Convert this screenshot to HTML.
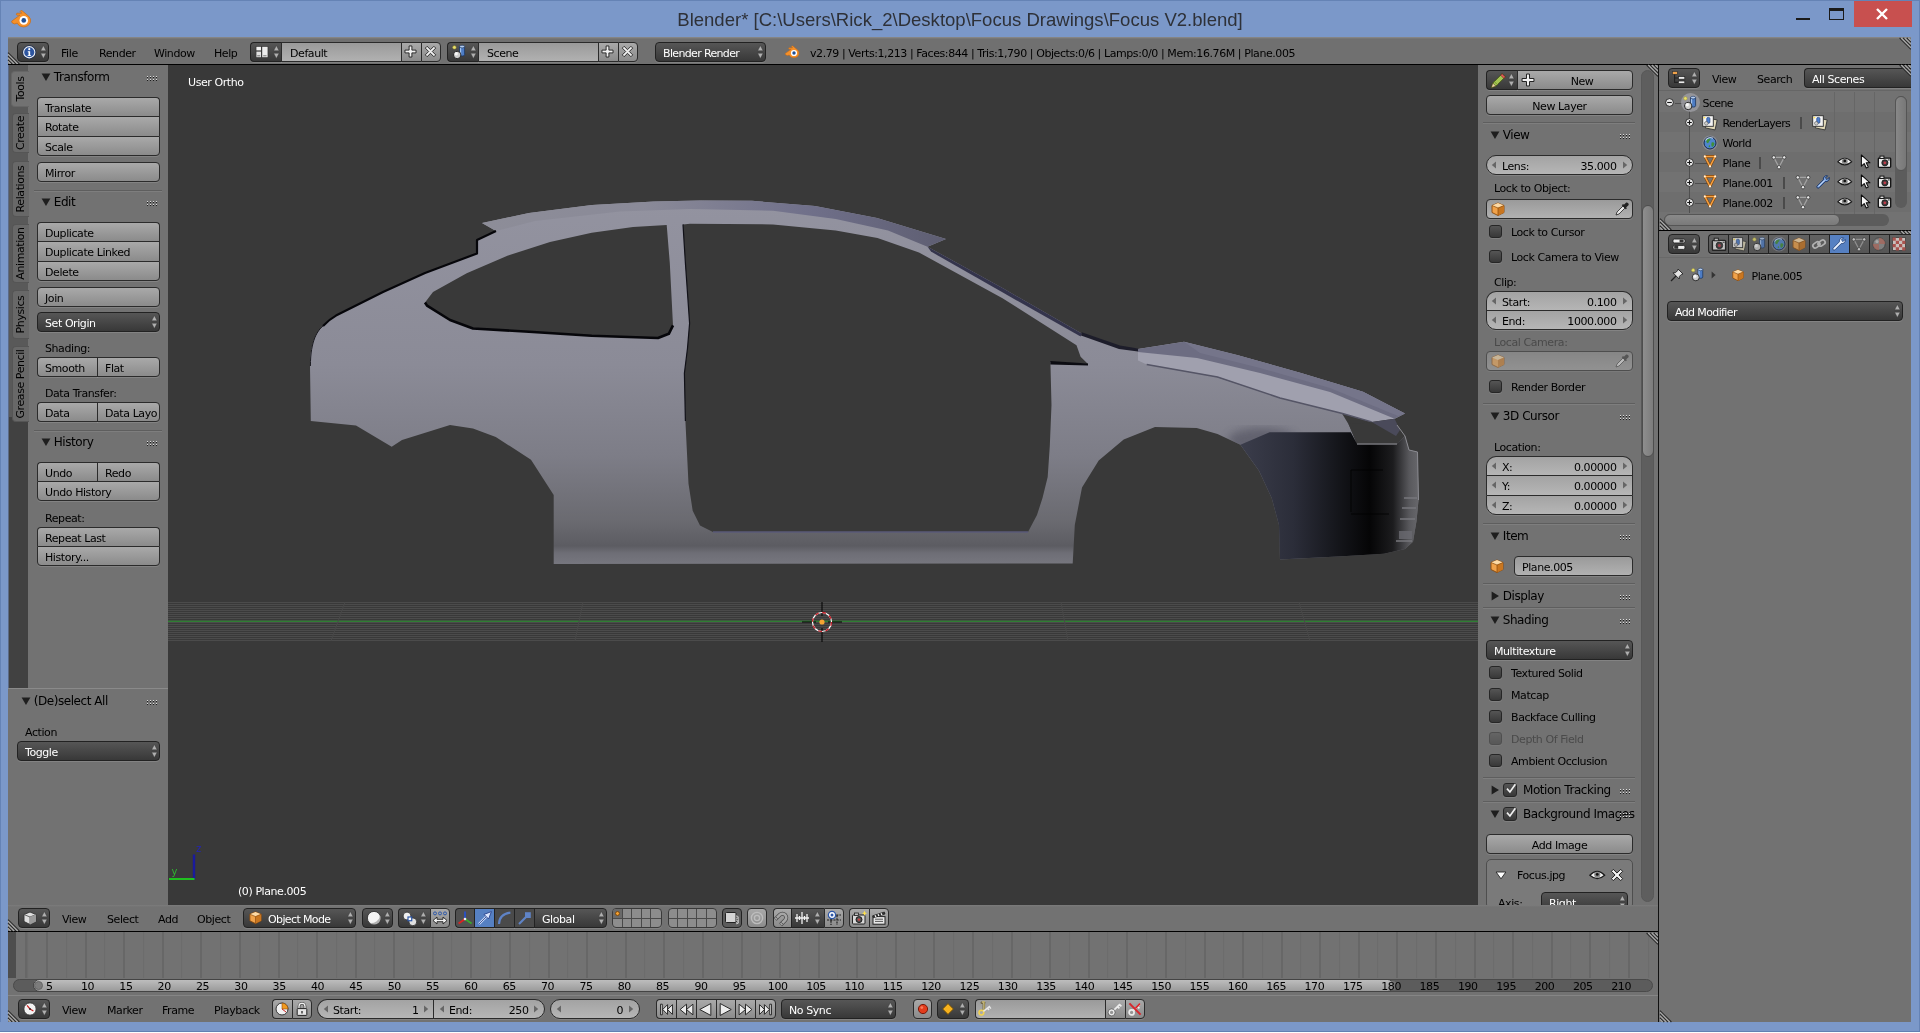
<!DOCTYPE html>
<html lang="en"><head><meta charset="utf-8"><title>Blender</title>
<style>

html,body{margin:0;padding:0;}
body{width:1920px;height:1033px;overflow:hidden;position:relative;background:#7b98c9;font-family:"DejaVu Sans","Liberation Sans",sans-serif;font-size:11px;letter-spacing:-0.42px;color:#000;}
div{position:absolute;box-sizing:border-box;white-space:nowrap;}
.btn,.menu,.num,.txt{overflow:hidden;}
svg{position:absolute;overflow:visible;}
.t{line-height:16px;height:16px;}
.w{color:#fff;}
.g{color:#4a4a4a;}
.ph{font-size:12px;letter-spacing:-0.45px;line-height:16px;height:16px;}
.reg{background:#727272;}
.dark{background:#393939;}
/* tool button */
.btn{background:linear-gradient(#a9a9a9,#8b8b8b);border:1px solid #2b2b2b;border-radius:4px;line-height:21px;padding-left:7px;box-shadow:0 1px 0 rgba(255,255,255,.12);}
.btn.c{padding-left:0;text-align:center;}
/* dark menu */
.menu{background:linear-gradient(#565656,#383838);border:1px solid #222;border-radius:4px;color:#fff;line-height:21px;padding-left:7px;box-shadow:0 1px 0 rgba(255,255,255,.12);}
/* number field */
.num{background:linear-gradient(#a3a3a3,#b6b6b6);border:1px solid #2b2b2b;border-radius:10px;line-height:21px;box-shadow:0 1px 0 rgba(255,255,255,.12);}
.num .l{left:15px;top:0;}
.num .r{right:15.5px;top:0;}
/* text field */
.txt{background:linear-gradient(#9a9a9a,#b1b1b1);border:1px solid #2b2b2b;border-radius:4px;line-height:21px;padding-left:7px;box-shadow:0 1px 0 rgba(255,255,255,.12);}
/* checkbox */
.chk{background:linear-gradient(#555,#383838);border:1px solid #262626;border-radius:3px;box-shadow:0 1px 0 rgba(255,255,255,.1);}
.rt,.num.rt{border-top-left-radius:0;border-top-right-radius:0;}
.rb,.num.rb{border-bottom-left-radius:0;border-bottom-right-radius:0;border-bottom-width:0;box-shadow:none;}
.rl,.num.rl{border-top-left-radius:0;border-bottom-left-radius:0;}
.rr,.num.rr{border-top-right-radius:0;border-bottom-right-radius:0;border-right-width:0;}
.sep{background:#5e5e5e;height:1px;border-bottom:1px solid #7e7e7e;box-sizing:content-box;}
.hl{background:#000;}

</style></head>
<body>
<div id="root" style="left:0;top:0;width:1920px;height:1033px;overflow:hidden;opacity:.9999;">

<div class="" style="left:0px;top:0px;width:1920px;height:1033px;background:#7b98c9;border:1px solid #6583b5;"></div>
<div style="left:0;top:2.6px;width:1920px;height:34px;line-height:34px;text-align:center;font-family:'Liberation Sans',sans-serif;font-size:18.55px;letter-spacing:0;color:#2e3138;">Blender* [C:\Users\Rick_2\Desktop\Focus Drawings\Focus V2.blend]</div>
<svg style="left:10px;top:8px;" width="22" height="22" viewBox="0 0 16 16"><path d="M1.2 9.6 L7.2 5.2 L5 5.2 Q4.2 4.4 5 3.8 L8.6 3.8 L7.4 2.6 Q7.6 1.6 8.8 2 L13.6 6 Q15.6 8 14.8 10.4 Q13.6 13.6 9.8 13.8 Q6.4 13.6 5.2 11 L3.4 11.6 Q1 11.2 1.2 9.6Z" fill="#f5902a" stroke="#c96a12" stroke-width=".5"/><circle cx="10" cy="9" r="3.1" fill="#fff"/><circle cx="10" cy="9" r="1.7" fill="#1f4e94"/></svg>
<div class="" style="left:1796px;top:18px;width:14px;height:2px;background:#1a1a1a;"></div>
<div class="" style="left:1829px;top:8px;width:15px;height:12px;border:1px solid #1a1a1a;border-top-width:3px;"></div>
<div class="" style="left:1854px;top:1px;width:58px;height:25.5px;background:#c8504f;"></div>
<svg style="left:1875px;top:7px" width="14" height="14" viewBox="0 0 14 14"><path d="M2 2 L12 12 M12 2 L2 12" stroke="#fff" stroke-width="2.4"/></svg>
<div class="" style="left:8px;top:37px;width:1903px;height:985px;background:#2e2e2e;"></div>
<div class="" style="left:8px;top:37px;width:1903px;height:27px;background:linear-gradient(#8c8c8c 0,#707070 2px,#707070);"></div>
<svg style="left:8px;top:52px" width="12" height="12" viewBox="0 0 12 12"><path d="M0 0.6 L11.4 12 M0 4.2 L7.8 12 M0 7.8 L4.2 12" stroke="#2a2a2a" stroke-width="1.1"/><path d="M0 2.2 L9.8 12 M0 5.8 L6.2 12 M0 9.4 L2.6 12" stroke="#a8a8a8" stroke-width="1.1"/></svg>
<svg style="left:1899px;top:38px" width="12" height="12" viewBox="0 0 12 12"><path d="M0.6 0 L12 11.4 M4.2 0 L12 7.8 M7.8 0 L12 4.2" stroke="#2a2a2a" stroke-width="1.1"/><path d="M2.2 0 L12 9.8 M5.8 0 L12 6.2 M9.4 0 L12 2.6" stroke="#a8a8a8" stroke-width="1.1"/></svg>
<div class="menu" style="left:17px;top:42px;width:32px;height:20px;"></div>
<svg style="left:22px;top:44.5px;" width="14.5" height="14.5" viewBox="0 0 16 16"><circle cx="8" cy="8" r="7.6" fill="#1c2f55"/><circle cx="8" cy="8" r="6.2" fill="#2d55a0" stroke="#f0f0f0" stroke-width="1.2"/><circle cx="8" cy="4.6" r="1.2" fill="#fff"/><path d="M6.4 7 H9 V11.2 H10 V12.2 H6.2 V11.2 H7.2 V8 H6.4Z" fill="#fff"/></svg>
<svg style="left:38.7px;top:45px;" width="14" height="14" viewBox="0 0 16 16"><path d="M1.85 6.6 L5 0.6 L8.15 6.6Z M1.85 9.4 L5 15.4 L8.15 9.4Z" fill="#b0b0b0" stroke="#333" stroke-width=".5"/></svg>
<div class="t" style="left:61px;top:46.2px;">File</div>
<div class="t" style="left:99px;top:46.2px;">Render</div>
<div class="t" style="left:154px;top:46.2px;">Window</div>
<div class="t" style="left:214px;top:46.2px;">Help</div>
<div class="menu rr" style="left:250px;top:42px;width:32px;height:20px;"></div>
<svg style="left:254px;top:44px;" width="16" height="16" viewBox="0 0 16 16"><rect x="1.5" y="2" width="13" height="12" rx="1" fill="#3a3a3a"/><rect x="2.4" y="2.8" width="4.6" height="3.6" fill="#f4f4f4"/><rect x="2.4" y="7.6" width="4.6" height="5.6" fill="#e2e2e2"/><rect x="8.2" y="2.8" width="5.4" height="10.4" fill="#ececec"/><path d="M3.2 11.8 H6.2 M9.2 11.8 H12.6" stroke="#555" stroke-width=".8"/></svg>
<svg style="left:271.7px;top:45px;" width="14" height="14" viewBox="0 0 16 16"><path d="M1.85 6.6 L5 0.6 L8.15 6.6Z M1.85 9.4 L5 15.4 L8.15 9.4Z" fill="#b0b0b0" stroke="#333" stroke-width=".5"/></svg>
<div class="txt rl rr" style="left:281px;top:42px;width:121px;height:20px;padding-left:8px;">Default</div>
<div class="btn rl rr" style="left:401px;top:42px;width:20px;height:20px;"></div>
<svg style="left:404.3px;top:45px;" width="13" height="13" viewBox="0 0 16 16"><path d="M6.3 1.2 H9.7 V6.3 H14.8 V9.7 H9.7 V14.8 H6.3 V9.7 H1.2 V6.3 H6.3Z" fill="#f2f2f2" stroke="#1c1c1c" stroke-width="1.1"/></svg>
<div class="btn rl" style="left:421px;top:42px;width:20px;height:20px;"></div>
<svg style="left:424.2px;top:45px;" width="13" height="13" viewBox="0 0 16 16"><path d="M1.6 3.8 L3.8 1.6 L8 5.8 L12.2 1.6 L14.4 3.8 L10.2 8 L14.4 12.2 L12.2 14.4 L8 10.2 L3.8 14.4 L1.6 12.2 L5.8 8Z" fill="#f2f2f2" stroke="#1c1c1c" stroke-width="1.1"/></svg>
<div class="menu rr" style="left:447px;top:42px;width:32px;height:20px;"></div>
<svg style="left:451px;top:44px;" width="16" height="16" viewBox="0 0 16 16"><path d="M8.6 2.6 V10.8 A2.5 1.3 0 0 0 13.6 10.8 V2.6Z" fill="#4d7cc4" stroke="#1c355f" stroke-width=".8"/><path d="M9.6 3.4 V11" stroke="#a9c8f2" stroke-width="1.1"/><ellipse cx="11.1" cy="2.6" rx="2.5" ry="1.3" fill="#b5cdee" stroke="#1c355f" stroke-width=".6"/><circle cx="6.2" cy="11" r="3.7" fill="#cfcfcf" stroke="#1a1a1a" stroke-width=".9"/><circle cx="5.2" cy="9.8" r="1.7" fill="#fff" opacity=".85"/><circle cx="3.4" cy="3.4" r="1.7" fill="#e8e070" stroke="#a89c2a" stroke-width=".5"/></svg>
<svg style="left:468.7px;top:45px;" width="14" height="14" viewBox="0 0 16 16"><path d="M1.85 6.6 L5 0.6 L8.15 6.6Z M1.85 9.4 L5 15.4 L8.15 9.4Z" fill="#b0b0b0" stroke="#333" stroke-width=".5"/></svg>
<div class="txt rl rr" style="left:478px;top:42px;width:121px;height:20px;padding-left:8px;">Scene</div>
<div class="btn rl rr" style="left:598px;top:42px;width:20px;height:20px;"></div>
<svg style="left:601.3px;top:45px;" width="13" height="13" viewBox="0 0 16 16"><path d="M6.3 1.2 H9.7 V6.3 H14.8 V9.7 H9.7 V14.8 H6.3 V9.7 H1.2 V6.3 H6.3Z" fill="#f2f2f2" stroke="#1c1c1c" stroke-width="1.1"/></svg>
<div class="btn rl" style="left:618px;top:42px;width:20px;height:20px;"></div>
<svg style="left:621.2px;top:45px;" width="13" height="13" viewBox="0 0 16 16"><path d="M1.6 3.8 L3.8 1.6 L8 5.8 L12.2 1.6 L14.4 3.8 L10.2 8 L14.4 12.2 L12.2 14.4 L8 10.2 L3.8 14.4 L1.6 12.2 L5.8 8Z" fill="#f2f2f2" stroke="#1c1c1c" stroke-width="1.1"/></svg>
<div class="menu" style="left:655px;top:42px;width:111px;height:20px;letter-spacing:-0.65px;">Blender Render</div>
<svg style="left:755.7px;top:45px;" width="14" height="14" viewBox="0 0 16 16"><path d="M1.85 6.6 L5 0.6 L8.15 6.6Z M1.85 9.4 L5 15.4 L8.15 9.4Z" fill="#b0b0b0" stroke="#333" stroke-width=".5"/></svg>
<svg style="left:784px;top:44px;" width="16" height="16" viewBox="0 0 16 16"><path d="M1.2 9.6 L7.2 5.2 L5 5.2 Q4.2 4.4 5 3.8 L8.6 3.8 L7.4 2.6 Q7.6 1.6 8.8 2 L13.6 6 Q15.6 8 14.8 10.4 Q13.6 13.6 9.8 13.8 Q6.4 13.6 5.2 11 L3.4 11.6 Q1 11.2 1.2 9.6Z" fill="#f5902a" stroke="#c96a12" stroke-width=".5"/><circle cx="10" cy="9" r="3.1" fill="#fff"/><circle cx="10" cy="9" r="1.7" fill="#1f4e94"/></svg>
<div class="t" style="left:810px;top:46.2px;">v2.79 | Verts:1,213 | Faces:844 | Tris:1,790 | Objects:0/6 | Lamps:0/0 | Mem:16.76M | Plane.005</div>
<div class="hl" style="left:8px;top:64px;width:1903px;height:1px;"></div>
<div class="reg" style="left:8px;top:65px;width:160px;height:624px;"></div>
<div class="" style="left:8px;top:65px;width:20px;height:624px;background:#414141;"></div>
<div class="" style="left:9px;top:65px;width:19px;height:352px;background:#595959;"></div>
<div class="" style="left:8px;top:65px;width:1px;height:624px;background:#5c6a86;"></div>
<div class="" style="left:11px;top:71px;width:18px;height:36px;background:#727272;border-radius:4px 0 0 4px;border:1px solid #666;border-right:0;"></div>
<div style="left:13px;top:71px;width:16px;height:36px;"><div style="left:0;top:0;width:36px;height:16px;line-height:16px;text-align:center;transform-origin:0 0;transform:translate(0,36px) rotate(-90deg);">Tools</div></div>
<div class="" style="left:12px;top:113px;width:17px;height:40px;background:#686868;border-radius:4px 0 0 4px;border:1px solid #555;border-right:0;"></div>
<div style="left:13px;top:113px;width:16px;height:40px;"><div style="left:0;top:0;width:40px;height:16px;line-height:16px;text-align:center;transform-origin:0 0;transform:translate(0,40px) rotate(-90deg);">Create</div></div>
<div class="" style="left:12px;top:161px;width:17px;height:56px;background:#686868;border-radius:4px 0 0 4px;border:1px solid #555;border-right:0;"></div>
<div style="left:13px;top:161px;width:16px;height:56px;"><div style="left:0;top:0;width:56px;height:16px;line-height:16px;text-align:center;transform-origin:0 0;transform:translate(0,56px) rotate(-90deg);">Relations</div></div>
<div class="" style="left:12px;top:224px;width:17px;height:59px;background:#686868;border-radius:4px 0 0 4px;border:1px solid #555;border-right:0;"></div>
<div style="left:13px;top:224px;width:16px;height:59px;"><div style="left:0;top:0;width:59px;height:16px;line-height:16px;text-align:center;transform-origin:0 0;transform:translate(0,59px) rotate(-90deg);">Animation</div></div>
<div class="" style="left:12px;top:290px;width:17px;height:49px;background:#686868;border-radius:4px 0 0 4px;border:1px solid #555;border-right:0;"></div>
<div style="left:13px;top:290px;width:16px;height:49px;"><div style="left:0;top:0;width:49px;height:16px;line-height:16px;text-align:center;transform-origin:0 0;transform:translate(0,49px) rotate(-90deg);">Physics</div></div>
<div class="" style="left:12px;top:346px;width:17px;height:76px;background:#686868;border-radius:4px 0 0 4px;border:1px solid #555;border-right:0;"></div>
<div style="left:13px;top:346px;width:16px;height:76px;"><div style="left:0;top:0;width:76px;height:16px;line-height:16px;text-align:center;transform-origin:0 0;transform:translate(0,76px) rotate(-90deg);">Grease Pencil</div></div>
<svg style="left:41px;top:72px" width="10" height="10" viewBox="0 0 10 10"><path d="M0.6 1.4 H9.4 L5 9Z" fill="#1e1e1e"/></svg>
<div class="ph" style="left:53.8px;top:69.1px;">Transform</div>
<svg style="left:147px;top:76px" width="10" height="5" shape-rendering="crispEdges"><rect x="0" y="0" width="1" height="1" fill="#dcdcdc"/><rect x="0" y="1" width="1" height="1" fill="#1c1c1c"/><rect x="0" y="3" width="1" height="1" fill="#dcdcdc"/><rect x="0" y="4" width="1" height="1" fill="#1c1c1c"/><rect x="3" y="0" width="1" height="1" fill="#dcdcdc"/><rect x="3" y="1" width="1" height="1" fill="#1c1c1c"/><rect x="3" y="3" width="1" height="1" fill="#dcdcdc"/><rect x="3" y="4" width="1" height="1" fill="#1c1c1c"/><rect x="6" y="0" width="1" height="1" fill="#dcdcdc"/><rect x="6" y="1" width="1" height="1" fill="#1c1c1c"/><rect x="6" y="3" width="1" height="1" fill="#dcdcdc"/><rect x="6" y="4" width="1" height="1" fill="#1c1c1c"/><rect x="9" y="0" width="1" height="1" fill="#dcdcdc"/><rect x="9" y="1" width="1" height="1" fill="#1c1c1c"/><rect x="9" y="3" width="1" height="1" fill="#dcdcdc"/><rect x="9" y="4" width="1" height="1" fill="#1c1c1c"/></svg>
<div class="btn rb" style="left:37px;top:97px;width:123px;height:19px;">Translate</div>
<div class="btn rt rb" style="left:37px;top:116px;width:123px;height:20px;">Rotate</div>
<div class="btn rt" style="left:37px;top:136px;width:123px;height:20px;">Scale</div>
<div class="btn" style="left:37px;top:162px;width:123px;height:20px;">Mirror</div>
<div class="sep" style="left:34px;top:190px;width:128px;height:1px;"></div>
<svg style="left:41px;top:197px" width="10" height="10" viewBox="0 0 10 10"><path d="M0.6 1.4 H9.4 L5 9Z" fill="#1e1e1e"/></svg>
<div class="ph" style="left:53.8px;top:194.1px;">Edit</div>
<svg style="left:147px;top:201px" width="10" height="5" shape-rendering="crispEdges"><rect x="0" y="0" width="1" height="1" fill="#dcdcdc"/><rect x="0" y="1" width="1" height="1" fill="#1c1c1c"/><rect x="0" y="3" width="1" height="1" fill="#dcdcdc"/><rect x="0" y="4" width="1" height="1" fill="#1c1c1c"/><rect x="3" y="0" width="1" height="1" fill="#dcdcdc"/><rect x="3" y="1" width="1" height="1" fill="#1c1c1c"/><rect x="3" y="3" width="1" height="1" fill="#dcdcdc"/><rect x="3" y="4" width="1" height="1" fill="#1c1c1c"/><rect x="6" y="0" width="1" height="1" fill="#dcdcdc"/><rect x="6" y="1" width="1" height="1" fill="#1c1c1c"/><rect x="6" y="3" width="1" height="1" fill="#dcdcdc"/><rect x="6" y="4" width="1" height="1" fill="#1c1c1c"/><rect x="9" y="0" width="1" height="1" fill="#dcdcdc"/><rect x="9" y="1" width="1" height="1" fill="#1c1c1c"/><rect x="9" y="3" width="1" height="1" fill="#dcdcdc"/><rect x="9" y="4" width="1" height="1" fill="#1c1c1c"/></svg>
<div class="btn rb" style="left:37px;top:222px;width:123px;height:19px;">Duplicate</div>
<div class="btn rt rb" style="left:37px;top:241px;width:123px;height:20px;">Duplicate Linked</div>
<div class="btn rt" style="left:37px;top:261px;width:123px;height:20px;">Delete</div>
<div class="btn" style="left:37px;top:287px;width:123px;height:20px;">Join</div>
<div class="menu" style="left:37px;top:312px;width:123px;height:20px;">Set Origin</div>
<svg style="left:149.7px;top:315px;" width="14" height="14" viewBox="0 0 16 16"><path d="M1.85 6.6 L5 0.6 L8.15 6.6Z M1.85 9.4 L5 15.4 L8.15 9.4Z" fill="#b0b0b0" stroke="#333" stroke-width=".5"/></svg>
<div class="t" style="left:45px;top:340.5px;">Shading:</div>
<div class="btn rr" style="left:37px;top:357px;width:61px;height:20px;">Smooth</div>
<div class="btn rl" style="left:97px;top:357px;width:63px;height:20px;">Flat</div>
<div class="t" style="left:45px;top:385.5px;">Data Transfer:</div>
<div class="btn rr" style="left:37px;top:402px;width:61px;height:20px;">Data</div>
<div class="btn rl" style="left:97px;top:402px;width:63px;height:20px;">Data Layo</div>
<div class="sep" style="left:34px;top:430px;width:128px;height:1px;"></div>
<svg style="left:41px;top:437px" width="10" height="10" viewBox="0 0 10 10"><path d="M0.6 1.4 H9.4 L5 9Z" fill="#1e1e1e"/></svg>
<div class="ph" style="left:53.8px;top:434.1px;">History</div>
<svg style="left:147px;top:441px" width="10" height="5" shape-rendering="crispEdges"><rect x="0" y="0" width="1" height="1" fill="#dcdcdc"/><rect x="0" y="1" width="1" height="1" fill="#1c1c1c"/><rect x="0" y="3" width="1" height="1" fill="#dcdcdc"/><rect x="0" y="4" width="1" height="1" fill="#1c1c1c"/><rect x="3" y="0" width="1" height="1" fill="#dcdcdc"/><rect x="3" y="1" width="1" height="1" fill="#1c1c1c"/><rect x="3" y="3" width="1" height="1" fill="#dcdcdc"/><rect x="3" y="4" width="1" height="1" fill="#1c1c1c"/><rect x="6" y="0" width="1" height="1" fill="#dcdcdc"/><rect x="6" y="1" width="1" height="1" fill="#1c1c1c"/><rect x="6" y="3" width="1" height="1" fill="#dcdcdc"/><rect x="6" y="4" width="1" height="1" fill="#1c1c1c"/><rect x="9" y="0" width="1" height="1" fill="#dcdcdc"/><rect x="9" y="1" width="1" height="1" fill="#1c1c1c"/><rect x="9" y="3" width="1" height="1" fill="#dcdcdc"/><rect x="9" y="4" width="1" height="1" fill="#1c1c1c"/></svg>
<div class="btn rr rb" style="left:37px;top:462px;width:61px;height:19px;">Undo</div>
<div class="btn rl rb" style="left:97px;top:462px;width:63px;height:19px;">Redo</div>
<div class="btn rt" style="left:37px;top:481px;width:123px;height:20px;">Undo History</div>
<div class="t" style="left:45px;top:510.5px;">Repeat:</div>
<div class="btn rb" style="left:37px;top:527px;width:123px;height:19px;">Repeat Last</div>
<div class="btn rt" style="left:37px;top:546px;width:123px;height:20px;">History...</div>
<div class="" style="left:8px;top:688px;width:160px;height:1px;background:#8a8a8a;"></div>
<div class="reg" style="left:8px;top:689px;width:160px;height:216px;"></div>
<svg style="left:21px;top:696px" width="10" height="10" viewBox="0 0 10 10"><path d="M0.6 1.4 H9.4 L5 9Z" fill="#1e1e1e"/></svg>
<div class="ph" style="left:33.8px;top:693.1px;">(De)select All</div>
<svg style="left:147px;top:700px" width="10" height="5" shape-rendering="crispEdges"><rect x="0" y="0" width="1" height="1" fill="#dcdcdc"/><rect x="0" y="1" width="1" height="1" fill="#1c1c1c"/><rect x="0" y="3" width="1" height="1" fill="#dcdcdc"/><rect x="0" y="4" width="1" height="1" fill="#1c1c1c"/><rect x="3" y="0" width="1" height="1" fill="#dcdcdc"/><rect x="3" y="1" width="1" height="1" fill="#1c1c1c"/><rect x="3" y="3" width="1" height="1" fill="#dcdcdc"/><rect x="3" y="4" width="1" height="1" fill="#1c1c1c"/><rect x="6" y="0" width="1" height="1" fill="#dcdcdc"/><rect x="6" y="1" width="1" height="1" fill="#1c1c1c"/><rect x="6" y="3" width="1" height="1" fill="#dcdcdc"/><rect x="6" y="4" width="1" height="1" fill="#1c1c1c"/><rect x="9" y="0" width="1" height="1" fill="#dcdcdc"/><rect x="9" y="1" width="1" height="1" fill="#1c1c1c"/><rect x="9" y="3" width="1" height="1" fill="#dcdcdc"/><rect x="9" y="4" width="1" height="1" fill="#1c1c1c"/></svg>
<div class="t" style="left:25px;top:724.5px;">Action</div>
<div class="menu" style="left:17px;top:741px;width:143px;height:20px;">Toggle</div>
<svg style="left:149.7px;top:744px;" width="14" height="14" viewBox="0 0 16 16"><path d="M1.85 6.6 L5 0.6 L8.15 6.6Z M1.85 9.4 L5 15.4 L8.15 9.4Z" fill="#b0b0b0" stroke="#333" stroke-width=".5"/></svg>
<div class="dark" style="left:168px;top:65px;width:1311px;height:841px;"></div>
<div class="" style="left:168px;top:602px;width:1311px;height:40px;background:repeating-linear-gradient(180deg,#4b4b4b 0 1px,#393939 1px 2px);"></div>
<div class="" style="left:168px;top:621px;width:1311px;height:1px;background:#2f7d33;"></div>
<div class="" style="left:168px;top:620px;width:1311px;height:1px;background:#3c5a3d;"></div>
<div class="t w" style="left:188px;top:74.5px;">User Ortho</div>
<div class="t w" style="left:238px;top:883.5px;">(0) Plane.005</div>

<svg style="left:168px;top:65px" width="1311" height="841" viewBox="168 65 1311 841">
<defs>
<linearGradient id="gb" gradientUnits="userSpaceOnUse" x1="0" y1="200" x2="0" y2="566">
<stop offset="0" stop-color="#9393a0"/><stop offset=".45" stop-color="#8b8b97"/><stop offset=".7" stop-color="#7d7d87"/><stop offset=".88" stop-color="#6a6a70"/><stop offset=".945" stop-color="#5c5c62"/><stop offset=".965" stop-color="#6e6e76"/><stop offset="1" stop-color="#787880"/>
</linearGradient>
<linearGradient id="gr" gradientUnits="userSpaceOnUse" x1="482" y1="0" x2="946" y2="0">
<stop offset="0" stop-color="#8d8d98"/><stop offset=".35" stop-color="#8a8a98"/><stop offset=".7" stop-color="#70708a"/><stop offset="1" stop-color="#5e5e72"/>
</linearGradient>
<linearGradient id="gf" gradientUnits="userSpaceOnUse" x1="1240" y1="0" x2="1420" y2="0">
<stop offset="0" stop-color="#3b3d4b"/><stop offset=".3" stop-color="#2b2d39"/><stop offset=".55" stop-color="#14151a"/><stop offset=".72" stop-color="#050506"/><stop offset=".85" stop-color="#1c1c1e"/><stop offset=".94" stop-color="#58585c"/><stop offset="1" stop-color="#6a6a6e"/>
</linearGradient>
<linearGradient id="gh" gradientUnits="userSpaceOnUse" x1="1180" y1="340" x2="1150" y2="420">
<stop offset="0" stop-color="#62627a"/><stop offset=".3" stop-color="#74748a"/><stop offset=".42" stop-color="#9c9cab"/><stop offset="1" stop-color="#9c9cab"/>
</linearGradient>
<linearGradient id="gl" gradientUnits="userSpaceOnUse" x1="310" y1="0" x2="560" y2="0">
<stop offset="0" stop-color="#9a9aa6" stop-opacity=".0"/><stop offset="1" stop-color="#9a9aa6" stop-opacity="0"/>
</linearGradient>
<filter id="bl" x="-10%" y="-10%" width="120%" height="120%"><feGaussianBlur stdDeviation="4"/></filter>
<clipPath id="cb"><path clip-rule="evenodd" d="
M482 223 L529 213 L592 205 L654 201.5 L700 200.4 L752 200.8 L815 206 L877 218 L946 239 L927.5 246.7 L1002.5 288 L1081.7 333.5
L1120 347 L1138 349 L1146 364 L1217 377 L1280 398 L1342 413.5 L1349 425 L1357 444 L1397 444 L1405 436 L1409 450 L1417.5 452 L1418.5 500 L1416.5 521 L1413 541.7 L1405 549 L1384 553.7 L1342.5 556.2 L1280 559.4
L1279 525 L1271.7 498 L1259 470.8 L1240.4 444.8 L1217.5 434 L1196.7 428 L1155 427 L1123.7 439.6 L1098.7 460.4 L1082 487.5 L1074.8 525 L1072.7 563.5
L553.7 564 L553.7 495 L531 459.8 L495.8 436.9 L473 428.5 L450 425 L402 440 L391.7 446.7 L356 425.4 L310.8 421
L310 366 C310 340 318 326 336 315.6 L383 292 L425 273 L477 253.5 L477 240 L496 231 Z
M425 302.5 L433 292 L466.7 273.3 L508 255.6 L550 242 L591.7 232.7 L633 227 L666.7 225 L669.8 263 L673 325.4 L668.8 333.8 L658 338 L591.7 335.8 L529 331.7 L473 328.5 L450 320 L427 305.6 Z
M683 224.4 L690 223.7 L773 224.4 L835.8 230.6 L877.5 238 L919 252.5 L1002.5 298.3 L1076.5 345.2 L1080.6 356.7 L1088 364 L1050.4 362 L1051.5 405 L1049.8 446 L1047.7 477 L1042.5 498 L1037 515 L1028 532
L713 532 L700 525.4 L692.7 510.8 L688.5 483.7 L685.4 421 L684.4 373.3 L687.5 348.3 L689.6 323.3 L685.4 263 Z"/></clipPath>
</defs>
<!-- main body -->
<path id="carbody" fill="url(#gb)" fill-rule="evenodd" d="
M482 223 L529 213 L592 205 L654 201.5 L700 200.4 L752 200.8 L815 206 L877 218 L946 239 L927.5 246.7 L1002.5 288 L1081.7 333.5
L1120 347 L1138 349 L1146 364 L1217 377 L1280 398 L1342 413.5 L1349 425 L1357 444 L1397 444 L1405 436 L1409 450 L1417.5 452 L1418.5 500 L1416.5 521 L1413 541.7 L1405 549 L1384 553.7 L1342.5 556.2 L1280 559.4
L1279 525 L1271.7 498 L1259 470.8 L1240.4 444.8 L1217.5 434 L1196.7 428 L1155 427 L1123.7 439.6 L1098.7 460.4 L1082 487.5 L1074.8 525 L1072.7 563.5
L553.7 564 L553.7 495 L531 459.8 L495.8 436.9 L473 428.5 L450 425 L402 440 L391.7 446.7 L356 425.4 L310.8 421
L310 366 C310 340 318 326 336 315.6 L383 292 L425 273 L477 253.5 L477 240 L496 231 Z
M425 302.5 L433 292 L466.7 273.3 L508 255.6 L550 242 L591.7 232.7 L633 227 L666.7 225 L669.8 263 L673 325.4 L668.8 333.8 L658 338 L591.7 335.8 L529 331.7 L473 328.5 L450 320 L427 305.6 Z
M683 224.4 L690 223.7 L773 224.4 L835.8 230.6 L877.5 238 L919 252.5 L1002.5 298.3 L1076.5 345.2 L1080.6 356.7 L1088 364 L1050.4 362 L1051.5 405 L1049.8 446 L1047.7 477 L1042.5 498 L1037 515 L1028 532
L713 532 L700 525.4 L692.7 510.8 L688.5 483.7 L685.4 421 L684.4 373.3 L687.5 348.3 L689.6 323.3 L685.4 263 Z"/>
<!-- roof darker strip -->
<path fill="url(#gr)" d="M482 223 L529 213 L592 205 L654 201.5 L700 200.4 L752 200.8 L815 206 L877 218 L946 239 L927.5 246.7 L888 230.6 L835.8 219 L773 210.8 L690 209 L620 211.5 L535 221 L496 231 Z"/>
<!-- A pillar dark top edge -->
<path d="M927.5 246.7 L1002.5 288 L1081.7 333.5 L1080.6 336.6 L1001.5 291.8 L931 251.6Z" fill="#34344c"/>
<!-- cowl dark line -->
<path d="M1081.7 332.3 L1120 345.5 L1138 348.5 L1138 351.5 L1119 349 L1081 335.5Z" fill="#1d1d2a"/>
<!-- door opening top-right dark line -->
<path d="M1050.4 361 L1088 363.4 L1088 365.6 L1050.4 364.4Z" fill="#0c0c12"/>
<!-- black outlines on rear -->
<path d="M323 326 Q329 319.5 336 315.6 L383 292 L425 273 L477 253.5 L477 240 L496 231" fill="none" stroke="#06060a" stroke-width="2.2" stroke-linejoin="round"/>
<path d="M310.4 366 C310.4 340 318 330 323 326" fill="none" stroke="#1a1a20" stroke-width="1"/>
<path d="M425 302.5 L427 305.6 L450 320 L473 328.5 L529 331.7 L591.7 335.8 L658 338 L668.8 333.8 L673 325.4" fill="none" stroke="#06060a" stroke-width="2.6" stroke-linejoin="round"/>
<path d="M683 224.4 L685.4 263 L689.6 323.3 L687.5 348.3 L684.4 373.3 L685.4 421" fill="none" stroke="#111118" stroke-width="1.2"/>
<!-- sill top blue edge -->
<path d="M713 532 L1028 532" stroke="#5a5a78" stroke-width="1.4"/>
<!-- hood -->
<path fill="#a0a0ae" d="M1138 349 L1184 341.7 L1238 355.2 L1301 373 L1363 391.7 L1405 413.5 L1394.6 418.7 L1371.7 421.9 L1342.5 413.5 L1280 398 L1217.5 377 L1146.7 364.6 L1138 360.4Z"/>
<path fill="#6d6d82" d="M1138 349 L1184 341.7 L1238 355.2 L1301 373 L1363 391.7 L1405 413.5 L1394.6 418.7 L1330 392 L1260 373 L1197 358 L1138 352Z"/>
<path fill="#85859a" d="M1184 341.7 L1238 355.2 L1301 373 L1363 391.7 L1405 413.5 L1398 416 L1330 388 L1260 368 L1200 353Z" opacity=".35"/>
<!-- hood lower shadow crease -->
<path d="M1146.7 364.6 L1217.5 377 L1280 398 L1342.5 413.5 L1371.7 421.9" fill="none" stroke="#555566" stroke-width="1.5"/>
<!-- headlight pocket (background) -->
<path fill="#393939" d="M1348.5 424 L1371.7 422.5 L1394.6 419.2 L1397 425 L1397 444 L1357 444Z"/>
<path fill="#4a4a5a" d="M1371.7 422 L1394.6 418.7 L1400 430 L1396 436Z"/>
<!-- dark front fender / bumper -->
<g clip-path="url(#cb)"><ellipse cx="1262" cy="440" rx="34" ry="12" fill="#4a4a58" opacity=".55" filter="url(#bl)"/></g>
<path fill="url(#gf)" d="M1240.4 444.8 L1269.6 432.3 L1350.8 432.3 L1357 443.7 L1397 443.7 L1405 436 L1409 450 L1417.5 452 L1418.5 500 L1416.5 521 L1413 541.7 L1405 549 L1384 553.7 L1342.5 556.2 L1280 559.4 L1279 525 L1271.7 498 L1259 470.8Z"/>
<path d="M1357 444 L1397 444" stroke="#77777c" stroke-width="1.4"/>
<path d="M1351 470 L1383 470 M1351 470 L1351 512 M1351 514 L1389 514" stroke="#000" stroke-width="1" fill="none" opacity=".8"/>
<path d="M1397 425 L1405 436 L1409 450 L1417.5 452 L1418.5 500" fill="none" stroke="#8a8a90" stroke-width="1"/>
<path d="M1404 498 L1417 498 M1402 508 L1416 508 M1400 519 L1415 519 M1396 541 L1412 541" stroke="#77777c" stroke-width="1.3"/>
<rect x="1399" y="531" width="13" height="8" fill="#6a6a70" opacity=".8"/>
<!-- smooth lighter rear-left fade -->
</svg>

<svg style="left:168px;top:600px" width="1311" height="44" viewBox="168 600 1311 44"><path d="M345 602 L331 641 M583 602 L575 641 M1061 602 L1068 641 M1299 602 L1310 641" stroke="#484848" stroke-width="1"/></svg>
<svg style="left:799.5px;top:599.5px" width="44" height="44" viewBox="-22 -22 44 44"><path d="M-20 0 H-6 M6 0 H20 M0 -20 V-6 M0 6 V20" stroke="#000" stroke-width="1"/><circle r="9.5" fill="none" stroke="#fff" stroke-width="1.2"/><circle r="9.5" fill="none" stroke="#c8202a" stroke-width="1.3" stroke-dasharray="3.73 3.73"/><circle r="2.6" fill="#f4a432"/></svg>
<svg style="left:168px;top:840px" width="40" height="44" viewBox="0 0 40 44"><path d="M26 14.5 V39.5" stroke="#1a1a9c" stroke-width="2.4"/><path d="M1 39 H26.5" stroke="#20c020" stroke-width="2"/><text x="28" y="11.5" font-size="10" fill="#2424b4" font-family="DejaVu Sans,sans-serif">z</text><text x="3.5" y="35" font-size="10" fill="#2fb32f" font-family="DejaVu Sans,sans-serif">y</text></svg>
<div class="reg" style="left:1478px;top:65px;width:180px;height:841px;"></div>
<div class="" style="left:1641px;top:70px;width:13px;height:832px;background:#5e5e5e;border-radius:6.5px;border:1px solid #585858;"></div>
<div class="" style="left:1642px;top:205px;width:12px;height:252px;background:linear-gradient(90deg,#8e8e8e,#7c7c7c);border-radius:6px;border:1px solid #4e4e4e;"></div>
<svg style="left:1646px;top:65px" width="12" height="12" viewBox="0 0 12 12"><path d="M0.6 0 L12 11.4 M4.2 0 L12 7.8 M7.8 0 L12 4.2" stroke="#2a2a2a" stroke-width="1.1"/><path d="M2.2 0 L12 9.8 M5.8 0 L12 6.2 M9.4 0 L12 2.6" stroke="#a8a8a8" stroke-width="1.1"/></svg>
<div class="menu rr" style="left:1486px;top:70px;width:32px;height:20px;"></div>
<svg style="left:1489.5px;top:71.5px;" width="17" height="17" viewBox="0 0 16 16"><path d="M1.2 14.8 L2.6 10.4 L11.4 1.6 L14.4 4.6 L5.6 13.4Z" fill="#a4c552" stroke="#3a4a12" stroke-width=".8"/><path d="M4 9 L7 12" stroke="#6f8f2a" stroke-width=".8"/><path d="M1.2 14.8 L2.6 10.4 L5.6 13.4Z" fill="#f0d9a8" stroke="#3a3a12" stroke-width=".6"/><path d="M10 3 L13 6 L14.4 4.6 L11.4 1.6Z" fill="#e45a5a" stroke="#5a1a12" stroke-width=".5"/></svg>
<svg style="left:1506.7px;top:73px;" width="14" height="14" viewBox="0 0 16 16"><path d="M1.85 6.6 L5 0.6 L8.15 6.6Z M1.85 9.4 L5 15.4 L8.15 9.4Z" fill="#b0b0b0" stroke="#333" stroke-width=".5"/></svg>
<div class="btn c rl" style="left:1517px;top:70px;width:116px;height:20px;padding-left:14px;">New</div>
<svg style="left:1521px;top:73px;" width="14" height="14" viewBox="0 0 16 16"><path d="M6.3 1.2 H9.7 V6.3 H14.8 V9.7 H9.7 V14.8 H6.3 V9.7 H1.2 V6.3 H6.3Z" fill="#f2f2f2" stroke="#1c1c1c" stroke-width="1.1"/></svg>
<div class="btn c" style="left:1486px;top:95px;width:147px;height:20px;">New Layer</div>
<div class="sep" style="left:1483px;top:122px;width:152px;height:1px;"></div>
<svg style="left:1490px;top:130px" width="10" height="10" viewBox="0 0 10 10"><path d="M0.6 1.4 H9.4 L5 9Z" fill="#1e1e1e"/></svg>
<div class="ph" style="left:1502.8px;top:127.1px;">View</div>
<svg style="left:1620px;top:134px" width="10" height="5" shape-rendering="crispEdges"><rect x="0" y="0" width="1" height="1" fill="#dcdcdc"/><rect x="0" y="1" width="1" height="1" fill="#1c1c1c"/><rect x="0" y="3" width="1" height="1" fill="#dcdcdc"/><rect x="0" y="4" width="1" height="1" fill="#1c1c1c"/><rect x="3" y="0" width="1" height="1" fill="#dcdcdc"/><rect x="3" y="1" width="1" height="1" fill="#1c1c1c"/><rect x="3" y="3" width="1" height="1" fill="#dcdcdc"/><rect x="3" y="4" width="1" height="1" fill="#1c1c1c"/><rect x="6" y="0" width="1" height="1" fill="#dcdcdc"/><rect x="6" y="1" width="1" height="1" fill="#1c1c1c"/><rect x="6" y="3" width="1" height="1" fill="#dcdcdc"/><rect x="6" y="4" width="1" height="1" fill="#1c1c1c"/><rect x="9" y="0" width="1" height="1" fill="#dcdcdc"/><rect x="9" y="1" width="1" height="1" fill="#1c1c1c"/><rect x="9" y="3" width="1" height="1" fill="#dcdcdc"/><rect x="9" y="4" width="1" height="1" fill="#1c1c1c"/></svg>
<div class="num" style="left:1486px;top:155px;width:147px;height:20px;"><div class="l">Lens:</div><div class="r">35.000</div><svg style="left:4px;top:5px" width="6" height="8" viewBox="0 0 6 8"><path d="M5 0.6 V7.4 L0.8 4Z" fill="#666"/></svg><svg style="right:4px;top:5px" width="6" height="8" viewBox="0 0 6 8"><path d="M1 0.6 V7.4 L5.2 4Z" fill="#666"/></svg></div>
<div class="t" style="left:1494px;top:180.5px;">Lock to Object:</div>
<div class="txt" style="left:1486px;top:199px;width:147px;height:20px;"></div>
<svg style="left:1490px;top:201px;" width="16" height="16" viewBox="0 0 16 16"><path d="M2 4.5 L8 2 L14 4.5 L14 11.5 L8 14.5 L2 11.5Z" fill="#f0a24a" stroke="#8a4a0c" stroke-width=".9"/><path d="M2 4.5 L8 7 L14 4.5 L8 2Z" fill="#fbd9a6"/><path d="M8 7 L14 4.5 V11.5 L8 14.5Z" fill="#c97620"/><path d="M2 4.5 L8 7 L14 4.5 M8 7 V14.5" stroke="#8a4a0c" stroke-width=".7" fill="none"/></svg>
<svg style="left:1614px;top:201px;" width="16" height="16" viewBox="0 0 16 16"><path d="M2 14 L3 11 L9 5 L11 7 L5 13Z" fill="#e6e6e6" stroke="#222" stroke-width=".8"/><path d="M8.4 3.6 L12.4 7.6 M10 5 L12.6 2.4 A1.2 1.2 0 0 1 13.8 3.6 L11.2 6.2" stroke="#222" stroke-width="1.8" fill="none"/></svg>
<div class="chk" style="left:1489px;top:225px;width:13px;height:13px;"></div>
<div class="t" style="left:1511px;top:224.5px;">Lock to Cursor</div>
<div class="chk" style="left:1489px;top:250px;width:13px;height:13px;"></div>
<div class="t" style="left:1511px;top:249.5px;">Lock Camera to View</div>
<div class="t" style="left:1494px;top:274.5px;">Clip:</div>
<div class="num rb" style="left:1486px;top:291px;width:147px;height:20px;"><div class="l">Start:</div><div class="r">0.100</div><svg style="left:4px;top:5px" width="6" height="8" viewBox="0 0 6 8"><path d="M5 0.6 V7.4 L0.8 4Z" fill="#666"/></svg><svg style="right:4px;top:5px" width="6" height="8" viewBox="0 0 6 8"><path d="M1 0.6 V7.4 L5.2 4Z" fill="#666"/></svg></div>
<div class="num rt" style="left:1486px;top:310px;width:147px;height:20px;"><div class="l">End:</div><div class="r">1000.000</div><svg style="left:4px;top:5px" width="6" height="8" viewBox="0 0 6 8"><path d="M5 0.6 V7.4 L0.8 4Z" fill="#666"/></svg><svg style="right:4px;top:5px" width="6" height="8" viewBox="0 0 6 8"><path d="M1 0.6 V7.4 L5.2 4Z" fill="#666"/></svg></div>
<div class="t g" style="left:1494px;top:334.5px;">Local Camera:</div>
<div class="txt" style="left:1486px;top:351px;width:147px;height:20px;opacity:.5;"></div>
<svg style="left:1490px;top:353px;" width="16" height="16" viewBox="0 0 16 16"><g opacity=".55"><path d="M2 4.5 L8 2 L14 4.5 L14 11.5 L8 14.5 L2 11.5Z" fill="#f0a24a" stroke="#8a4a0c" stroke-width=".9"/><path d="M2 4.5 L8 7 L14 4.5 L8 2Z" fill="#fbd9a6"/><path d="M8 7 L14 4.5 V11.5 L8 14.5Z" fill="#c97620"/></g></svg>
<svg style="left:1614px;top:353px;opacity:.5;" width="16" height="16" viewBox="0 0 16 16"><path d="M2 14 L3 11 L9 5 L11 7 L5 13Z" fill="#e6e6e6" stroke="#222" stroke-width=".8"/><path d="M8.4 3.6 L12.4 7.6 M10 5 L12.6 2.4 A1.2 1.2 0 0 1 13.8 3.6 L11.2 6.2" stroke="#222" stroke-width="1.8" fill="none"/></svg>
<div class="chk" style="left:1489px;top:380px;width:13px;height:13px;"></div>
<div class="t" style="left:1511px;top:379.5px;">Render Border</div>
<div class="sep" style="left:1483px;top:403px;width:152px;height:1px;"></div>
<svg style="left:1490px;top:411px" width="10" height="10" viewBox="0 0 10 10"><path d="M0.6 1.4 H9.4 L5 9Z" fill="#1e1e1e"/></svg>
<div class="ph" style="left:1502.8px;top:408.1px;">3D Cursor</div>
<svg style="left:1620px;top:415px" width="10" height="5" shape-rendering="crispEdges"><rect x="0" y="0" width="1" height="1" fill="#dcdcdc"/><rect x="0" y="1" width="1" height="1" fill="#1c1c1c"/><rect x="0" y="3" width="1" height="1" fill="#dcdcdc"/><rect x="0" y="4" width="1" height="1" fill="#1c1c1c"/><rect x="3" y="0" width="1" height="1" fill="#dcdcdc"/><rect x="3" y="1" width="1" height="1" fill="#1c1c1c"/><rect x="3" y="3" width="1" height="1" fill="#dcdcdc"/><rect x="3" y="4" width="1" height="1" fill="#1c1c1c"/><rect x="6" y="0" width="1" height="1" fill="#dcdcdc"/><rect x="6" y="1" width="1" height="1" fill="#1c1c1c"/><rect x="6" y="3" width="1" height="1" fill="#dcdcdc"/><rect x="6" y="4" width="1" height="1" fill="#1c1c1c"/><rect x="9" y="0" width="1" height="1" fill="#dcdcdc"/><rect x="9" y="1" width="1" height="1" fill="#1c1c1c"/><rect x="9" y="3" width="1" height="1" fill="#dcdcdc"/><rect x="9" y="4" width="1" height="1" fill="#1c1c1c"/></svg>
<div class="t" style="left:1494px;top:439.5px;">Location:</div>
<div class="num rb" style="left:1486px;top:456px;width:147px;height:20px;"><div class="l">X:</div><div class="r">0.00000</div><svg style="left:4px;top:5px" width="6" height="8" viewBox="0 0 6 8"><path d="M5 0.6 V7.4 L0.8 4Z" fill="#666"/></svg><svg style="right:4px;top:5px" width="6" height="8" viewBox="0 0 6 8"><path d="M1 0.6 V7.4 L5.2 4Z" fill="#666"/></svg></div>
<div class="num rt rb" style="left:1486px;top:475px;width:147px;height:20px;"><div class="l">Y:</div><div class="r">0.00000</div><svg style="left:4px;top:5px" width="6" height="8" viewBox="0 0 6 8"><path d="M5 0.6 V7.4 L0.8 4Z" fill="#666"/></svg><svg style="right:4px;top:5px" width="6" height="8" viewBox="0 0 6 8"><path d="M1 0.6 V7.4 L5.2 4Z" fill="#666"/></svg></div>
<div class="num rt" style="left:1486px;top:495px;width:147px;height:20px;"><div class="l">Z:</div><div class="r">0.00000</div><svg style="left:4px;top:5px" width="6" height="8" viewBox="0 0 6 8"><path d="M5 0.6 V7.4 L0.8 4Z" fill="#666"/></svg><svg style="right:4px;top:5px" width="6" height="8" viewBox="0 0 6 8"><path d="M1 0.6 V7.4 L5.2 4Z" fill="#666"/></svg></div>
<div class="sep" style="left:1483px;top:523px;width:152px;height:1px;"></div>
<svg style="left:1490px;top:531px" width="10" height="10" viewBox="0 0 10 10"><path d="M0.6 1.4 H9.4 L5 9Z" fill="#1e1e1e"/></svg>
<div class="ph" style="left:1502.8px;top:528.1px;">Item</div>
<svg style="left:1620px;top:535px" width="10" height="5" shape-rendering="crispEdges"><rect x="0" y="0" width="1" height="1" fill="#dcdcdc"/><rect x="0" y="1" width="1" height="1" fill="#1c1c1c"/><rect x="0" y="3" width="1" height="1" fill="#dcdcdc"/><rect x="0" y="4" width="1" height="1" fill="#1c1c1c"/><rect x="3" y="0" width="1" height="1" fill="#dcdcdc"/><rect x="3" y="1" width="1" height="1" fill="#1c1c1c"/><rect x="3" y="3" width="1" height="1" fill="#dcdcdc"/><rect x="3" y="4" width="1" height="1" fill="#1c1c1c"/><rect x="6" y="0" width="1" height="1" fill="#dcdcdc"/><rect x="6" y="1" width="1" height="1" fill="#1c1c1c"/><rect x="6" y="3" width="1" height="1" fill="#dcdcdc"/><rect x="6" y="4" width="1" height="1" fill="#1c1c1c"/><rect x="9" y="0" width="1" height="1" fill="#dcdcdc"/><rect x="9" y="1" width="1" height="1" fill="#1c1c1c"/><rect x="9" y="3" width="1" height="1" fill="#dcdcdc"/><rect x="9" y="4" width="1" height="1" fill="#1c1c1c"/></svg>
<svg style="left:1489px;top:558px;" width="16" height="16" viewBox="0 0 16 16"><path d="M2 4.5 L8 2 L14 4.5 L14 11.5 L8 14.5 L2 11.5Z" fill="#f0a24a" stroke="#8a4a0c" stroke-width=".9"/><path d="M2 4.5 L8 7 L14 4.5 L8 2Z" fill="#fbd9a6"/><path d="M8 7 L14 4.5 V11.5 L8 14.5Z" fill="#c97620"/><path d="M2 4.5 L8 7 L14 4.5 M8 7 V14.5" stroke="#8a4a0c" stroke-width=".7" fill="none"/></svg>
<div class="txt" style="left:1514px;top:556px;width:119px;height:20px;">Plane.005</div>
<div class="sep" style="left:1483px;top:583px;width:152px;height:1px;"></div>
<svg style="left:1490px;top:591px" width="10" height="10" viewBox="0 0 10 10"><path d="M1.6 0.6 V9.4 L9 5Z" fill="#1e1e1e"/></svg>
<div class="ph" style="left:1502.8px;top:588.1px;">Display</div>
<svg style="left:1620px;top:595px" width="10" height="5" shape-rendering="crispEdges"><rect x="0" y="0" width="1" height="1" fill="#dcdcdc"/><rect x="0" y="1" width="1" height="1" fill="#1c1c1c"/><rect x="0" y="3" width="1" height="1" fill="#dcdcdc"/><rect x="0" y="4" width="1" height="1" fill="#1c1c1c"/><rect x="3" y="0" width="1" height="1" fill="#dcdcdc"/><rect x="3" y="1" width="1" height="1" fill="#1c1c1c"/><rect x="3" y="3" width="1" height="1" fill="#dcdcdc"/><rect x="3" y="4" width="1" height="1" fill="#1c1c1c"/><rect x="6" y="0" width="1" height="1" fill="#dcdcdc"/><rect x="6" y="1" width="1" height="1" fill="#1c1c1c"/><rect x="6" y="3" width="1" height="1" fill="#dcdcdc"/><rect x="6" y="4" width="1" height="1" fill="#1c1c1c"/><rect x="9" y="0" width="1" height="1" fill="#dcdcdc"/><rect x="9" y="1" width="1" height="1" fill="#1c1c1c"/><rect x="9" y="3" width="1" height="1" fill="#dcdcdc"/><rect x="9" y="4" width="1" height="1" fill="#1c1c1c"/></svg>
<div class="sep" style="left:1483px;top:607px;width:152px;height:1px;"></div>
<svg style="left:1490px;top:615px" width="10" height="10" viewBox="0 0 10 10"><path d="M0.6 1.4 H9.4 L5 9Z" fill="#1e1e1e"/></svg>
<div class="ph" style="left:1502.8px;top:612.1px;">Shading</div>
<svg style="left:1620px;top:619px" width="10" height="5" shape-rendering="crispEdges"><rect x="0" y="0" width="1" height="1" fill="#dcdcdc"/><rect x="0" y="1" width="1" height="1" fill="#1c1c1c"/><rect x="0" y="3" width="1" height="1" fill="#dcdcdc"/><rect x="0" y="4" width="1" height="1" fill="#1c1c1c"/><rect x="3" y="0" width="1" height="1" fill="#dcdcdc"/><rect x="3" y="1" width="1" height="1" fill="#1c1c1c"/><rect x="3" y="3" width="1" height="1" fill="#dcdcdc"/><rect x="3" y="4" width="1" height="1" fill="#1c1c1c"/><rect x="6" y="0" width="1" height="1" fill="#dcdcdc"/><rect x="6" y="1" width="1" height="1" fill="#1c1c1c"/><rect x="6" y="3" width="1" height="1" fill="#dcdcdc"/><rect x="6" y="4" width="1" height="1" fill="#1c1c1c"/><rect x="9" y="0" width="1" height="1" fill="#dcdcdc"/><rect x="9" y="1" width="1" height="1" fill="#1c1c1c"/><rect x="9" y="3" width="1" height="1" fill="#dcdcdc"/><rect x="9" y="4" width="1" height="1" fill="#1c1c1c"/></svg>
<div class="menu" style="left:1486px;top:640px;width:147px;height:20px;">Multitexture</div>
<svg style="left:1622.7px;top:643px;" width="14" height="14" viewBox="0 0 16 16"><path d="M1.85 6.6 L5 0.6 L8.15 6.6Z M1.85 9.4 L5 15.4 L8.15 9.4Z" fill="#b0b0b0" stroke="#333" stroke-width=".5"/></svg>
<div class="chk" style="left:1489px;top:666px;width:13px;height:13px;"></div>
<div class="t" style="left:1511px;top:665.5px;">Textured Solid</div>
<div class="chk" style="left:1489px;top:688px;width:13px;height:13px;"></div>
<div class="t" style="left:1511px;top:687.5px;">Matcap</div>
<div class="chk" style="left:1489px;top:710px;width:13px;height:13px;"></div>
<div class="t" style="left:1511px;top:709.5px;">Backface Culling</div>
<div class="chk" style="left:1489px;top:732px;width:13px;height:13px;opacity:.45;"></div>
<div class="t g" style="left:1511px;top:731.5px;">Depth Of Field</div>
<div class="chk" style="left:1489px;top:754px;width:13px;height:13px;"></div>
<div class="t" style="left:1511px;top:753.5px;">Ambient Occlusion</div>
<div class="sep" style="left:1483px;top:777px;width:152px;height:1px;"></div>
<svg style="left:1490px;top:785px" width="10" height="10" viewBox="0 0 10 10"><path d="M1.6 0.6 V9.4 L9 5Z" fill="#1e1e1e"/></svg>
<div class="ph" style="left:1523px;top:782.1px;">Motion Tracking</div>
<svg style="left:1620px;top:789px" width="10" height="5" shape-rendering="crispEdges"><rect x="0" y="0" width="1" height="1" fill="#dcdcdc"/><rect x="0" y="1" width="1" height="1" fill="#1c1c1c"/><rect x="0" y="3" width="1" height="1" fill="#dcdcdc"/><rect x="0" y="4" width="1" height="1" fill="#1c1c1c"/><rect x="3" y="0" width="1" height="1" fill="#dcdcdc"/><rect x="3" y="1" width="1" height="1" fill="#1c1c1c"/><rect x="3" y="3" width="1" height="1" fill="#dcdcdc"/><rect x="3" y="4" width="1" height="1" fill="#1c1c1c"/><rect x="6" y="0" width="1" height="1" fill="#dcdcdc"/><rect x="6" y="1" width="1" height="1" fill="#1c1c1c"/><rect x="6" y="3" width="1" height="1" fill="#dcdcdc"/><rect x="6" y="4" width="1" height="1" fill="#1c1c1c"/><rect x="9" y="0" width="1" height="1" fill="#dcdcdc"/><rect x="9" y="1" width="1" height="1" fill="#1c1c1c"/><rect x="9" y="3" width="1" height="1" fill="#dcdcdc"/><rect x="9" y="4" width="1" height="1" fill="#1c1c1c"/></svg>
<div class="chk" style="left:1503px;top:783px;width:14px;height:14px;"></div>
<svg style="left:1504px;top:782px;" width="14" height="14" viewBox="0 0 16 16"><path d="M3.4 7.6 L6.8 11.4 L13 2.6" fill="none" stroke="#f0f0f0" stroke-width="1.9"/></svg>
<div class="sep" style="left:1483px;top:801px;width:152px;height:1px;"></div>
<svg style="left:1490px;top:809px" width="10" height="10" viewBox="0 0 10 10"><path d="M0.6 1.4 H9.4 L5 9Z" fill="#1e1e1e"/></svg>
<div class="ph" style="left:1523px;top:806.1px;">Background Images</div>
<svg style="left:1620px;top:813px" width="10" height="5" shape-rendering="crispEdges"><rect x="0" y="0" width="1" height="1" fill="#dcdcdc"/><rect x="0" y="1" width="1" height="1" fill="#1c1c1c"/><rect x="0" y="3" width="1" height="1" fill="#dcdcdc"/><rect x="0" y="4" width="1" height="1" fill="#1c1c1c"/><rect x="3" y="0" width="1" height="1" fill="#dcdcdc"/><rect x="3" y="1" width="1" height="1" fill="#1c1c1c"/><rect x="3" y="3" width="1" height="1" fill="#dcdcdc"/><rect x="3" y="4" width="1" height="1" fill="#1c1c1c"/><rect x="6" y="0" width="1" height="1" fill="#dcdcdc"/><rect x="6" y="1" width="1" height="1" fill="#1c1c1c"/><rect x="6" y="3" width="1" height="1" fill="#dcdcdc"/><rect x="6" y="4" width="1" height="1" fill="#1c1c1c"/><rect x="9" y="0" width="1" height="1" fill="#dcdcdc"/><rect x="9" y="1" width="1" height="1" fill="#1c1c1c"/><rect x="9" y="3" width="1" height="1" fill="#dcdcdc"/><rect x="9" y="4" width="1" height="1" fill="#1c1c1c"/></svg>
<div class="chk" style="left:1503px;top:807px;width:14px;height:14px;"></div>
<svg style="left:1504px;top:806px;" width="14" height="14" viewBox="0 0 16 16"><path d="M3.4 7.6 L6.8 11.4 L13 2.6" fill="none" stroke="#f0f0f0" stroke-width="1.9"/></svg>
<div class="btn c" style="left:1486px;top:834px;width:147px;height:20px;">Add Image</div>
<div class="" style="left:1486px;top:859px;width:147px;height:50px;background:#7a7a7a;border:1px solid #4e4e4e;border-radius:5px;"></div>
<svg style="left:1494px;top:868px;" width="14" height="14" viewBox="0 0 16 16"><path d="M2.4 4.6 H13.6 L8 12.4Z" fill="#fff" stroke="#222" stroke-width="1"/></svg>
<div class="t" style="left:1517px;top:867.5px;">Focus.jpg</div>
<svg style="left:1588.5px;top:866.5px;" width="16.5" height="16.5" viewBox="0 0 16 16"><path d="M0.8 8 Q8 0.6 15.2 8 Q8 14.4 0.8 8Z" fill="#f4f4f4" stroke="#1a1a1a" stroke-width="1.1"/><circle cx="8" cy="7.6" r="3" fill="#8a8a8a"/><circle cx="8" cy="7.2" r="1.4" fill="#111"/></svg>
<svg style="left:1610px;top:868px;" width="14" height="14" viewBox="0 0 16 16"><path d="M1.6 3.8 L3.8 1.6 L8 5.8 L12.2 1.6 L14.4 3.8 L10.2 8 L14.4 12.2 L12.2 14.4 L8 10.2 L3.8 14.4 L1.6 12.2 L5.8 8Z" fill="#f2f2f2" stroke="#1c1c1c" stroke-width="1.1"/></svg>
<div class="t" style="left:1498px;top:895.5px;">Axis:</div>
<div class="menu" style="left:1541px;top:892px;width:87px;height:20px;">Right</div>
<svg style="left:1617.7px;top:895px;" width="14" height="14" viewBox="0 0 16 16"><path d="M1.85 6.6 L5 0.6 L8.15 6.6Z M1.85 9.4 L5 15.4 L8.15 9.4Z" fill="#b0b0b0" stroke="#333" stroke-width=".5"/></svg>
<div class="reg" style="left:8px;top:905px;width:1650px;height:26px;background:linear-gradient(#7c7c7c 0,#727272 2px);"></div>
<div class="hl" style="left:8px;top:931px;width:1650px;height:1px;"></div>
<svg style="left:8px;top:919px" width="12" height="12" viewBox="0 0 12 12"><path d="M0 0.6 L11.4 12 M0 4.2 L7.8 12 M0 7.8 L4.2 12" stroke="#2a2a2a" stroke-width="1.1"/><path d="M0 2.2 L9.8 12 M0 5.8 L6.2 12 M0 9.4 L2.6 12" stroke="#a8a8a8" stroke-width="1.1"/></svg>
<div class="menu" style="left:18px;top:908px;width:32px;height:20px;"></div>
<svg style="left:21.5px;top:910px;" width="16" height="16" viewBox="0 0 16 16"><path d="M2 4.5 L8 2 L14 4.5 L14 11.5 L8 14.5 L2 11.5Z" fill="#dedede" stroke="#333" stroke-width=".9"/><path d="M2 4.5 L8 7 L14 4.5 M8 7 V14.5" stroke="#555" stroke-width=".9" fill="none"/><path d="M8 7 L14 4.5 V11.5 L8 14.5Z" fill="#9a9a9a"/></svg>
<svg style="left:39.7px;top:911px;" width="14" height="14" viewBox="0 0 16 16"><path d="M1.85 6.6 L5 0.6 L8.15 6.6Z M1.85 9.4 L5 15.4 L8.15 9.4Z" fill="#b0b0b0" stroke="#333" stroke-width=".5"/></svg>
<div class="t" style="left:62px;top:911.5px;">View</div>
<div class="t" style="left:107px;top:911.5px;">Select</div>
<div class="t" style="left:158px;top:911.5px;">Add</div>
<div class="t" style="left:197px;top:911.5px;">Object</div>
<div class="menu" style="left:243px;top:908px;width:112.5px;height:20px;padding-left:24px;letter-spacing:-0.62px;">Object Mode</div>
<svg style="left:248px;top:910px;" width="15" height="15" viewBox="0 0 16 16"><path d="M2 4.5 L8 2 L14 4.5 L14 11.5 L8 14.5 L2 11.5Z" fill="#f0a24a" stroke="#8a4a0c" stroke-width=".9"/><path d="M2 4.5 L8 7 L14 4.5 L8 2Z" fill="#fbd9a6"/><path d="M8 7 L14 4.5 V11.5 L8 14.5Z" fill="#c97620"/><path d="M2 4.5 L8 7 L14 4.5 M8 7 V14.5" stroke="#8a4a0c" stroke-width=".7" fill="none"/></svg>
<svg style="left:345.7px;top:911px;" width="14" height="14" viewBox="0 0 16 16"><path d="M1.85 6.6 L5 0.6 L8.15 6.6Z M1.85 9.4 L5 15.4 L8.15 9.4Z" fill="#b0b0b0" stroke="#333" stroke-width=".5"/></svg>
<div class="menu" style="left:361.5px;top:908px;width:31px;height:20px;"></div>
<svg style="left:365.5px;top:910px;" width="16" height="16" viewBox="0 0 16 16"><circle cx="8" cy="8" r="6.6" fill="#f4f4f4" stroke="#2a2a2a" stroke-width=".8"/><path d="M8 14.6 A6.6 6.6 0 0 0 14.2 5.6 A9 9 0 0 1 3.4 12.8 A6.6 6.6 0 0 0 8 14.6Z" fill="#b0b0b0"/></svg>
<svg style="left:382.7px;top:911px;" width="14" height="14" viewBox="0 0 16 16"><path d="M1.85 6.6 L5 0.6 L8.15 6.6Z M1.85 9.4 L5 15.4 L8.15 9.4Z" fill="#b0b0b0" stroke="#333" stroke-width=".5"/></svg>
<div class="menu rr" style="left:398px;top:908px;width:32px;height:20px;"></div>
<svg style="left:400.5px;top:909.5px;" width="17.5" height="17.5" viewBox="0 0 16 16"><circle cx="5.5" cy="5.5" r="3.6" fill="#f0f0f0" stroke="#333" stroke-width=".8"/><circle cx="10.8" cy="10.8" r="3.6" fill="#e0e0e0" stroke="#333" stroke-width=".8"/><rect x="6.4" y="6.4" width="3.4" height="3.4" fill="#fff" stroke="#2d57a8" stroke-width="1.1"/></svg>
<svg style="left:418.7px;top:911px;" width="14" height="14" viewBox="0 0 16 16"><path d="M1.85 6.6 L5 0.6 L8.15 6.6Z M1.85 9.4 L5 15.4 L8.15 9.4Z" fill="#b0b0b0" stroke="#333" stroke-width=".5"/></svg>
<div class="btn rl" style="left:429.5px;top:908px;width:20px;height:20px;"></div>
<svg style="left:431.5px;top:910px;" width="16" height="16" viewBox="0 0 16 16"><circle cx="3" cy="3.4" r="1.5" fill="none" stroke="#2d57a8" stroke-width="1"/><circle cx="8" cy="3.4" r="1.5" fill="none" stroke="#2d57a8" stroke-width="1"/><circle cx="13" cy="3.4" r="1.5" fill="none" stroke="#2d57a8" stroke-width="1"/><path d="M1 10.5 L5 7 V9.3 H11 V7 L15 10.5 L11 14 V11.7 H5 V14Z" fill="#f0f0f0" stroke="#222" stroke-width=".9"/></svg>
<div class="menu rr" style="left:455px;top:908px;width:20px;height:20px;background:#505050;"></div>
<svg style="left:457px;top:910px;" width="16" height="16" viewBox="0 0 16 16"><path d="M8 9 V1.5" stroke="#2a52c8" stroke-width="1.8"/><path d="M8 9 L1.6 13.4" stroke="#d22" stroke-width="1.8"/><path d="M8 9 L14.6 13.4" stroke="#3aa92c" stroke-width="1.8"/><circle cx="8" cy="9" r="1.3" fill="#eee"/></svg>
<div class="menu rl rr" style="left:474px;top:908px;width:21px;height:20px;background:#5680c2;"></div>
<svg style="left:476.5px;top:910px;" width="16" height="16" viewBox="0 0 16 16"><path d="M2 14 L9.6 6.4" stroke="#c9d8f6" stroke-width="2.4"/><path d="M2 14 L9.6 6.4" stroke="#27408a" stroke-width=".8"/><path d="M14.4 1.6 L7 4.4 L11.6 9Z" fill="#dbe6ff" stroke="#27408a" stroke-width=".9"/></svg>
<div class="menu rl rr" style="left:494px;top:908px;width:21px;height:20px;background:#4a4a4a;"></div>
<svg style="left:496.5px;top:910px;" width="16" height="16" viewBox="0 0 16 16"><path d="M2 14 Q2.4 4 13.4 2.6" fill="none" stroke="#5f83c6" stroke-width="2.2"/></svg>
<div class="menu rl rr" style="left:514px;top:908px;width:21px;height:20px;background:#4a4a4a;"></div>
<svg style="left:516.5px;top:910px;" width="16" height="16" viewBox="0 0 16 16"><path d="M2 14 L9.5 6.5" stroke="#5f83c6" stroke-width="2.2"/><rect x="8" y="2.2" width="5.8" height="5.8" fill="#5f83c6"/></svg>
<div class="menu rl" style="left:534px;top:908px;width:72.5px;height:20px;">Global</div>
<svg style="left:596.7px;top:911px;" width="14" height="14" viewBox="0 0 16 16"><path d="M1.85 6.6 L5 0.6 L8.15 6.6Z M1.85 9.4 L5 15.4 L8.15 9.4Z" fill="#b0b0b0" stroke="#333" stroke-width=".5"/></svg>
<div style="left:612px;top:908px;width:49.5px;height:20px;border:1px solid #3a3a3a;border-radius:4px;background:#8d8d8d;overflow:hidden;box-shadow:0 1px 0 rgba(255,255,255,.12);"><div style="left:8.6px;top:0;width:1px;height:18px;background:#4a4a4a;"></div><div style="left:18.2px;top:0;width:1px;height:18px;background:#4a4a4a;"></div><div style="left:27.8px;top:0;width:1px;height:18px;background:#4a4a4a;"></div><div style="left:37.4px;top:0;width:1px;height:18px;background:#4a4a4a;"></div><div style="left:0;top:8.5px;width:48px;height:1px;background:#4a4a4a;"></div><div style="left:0;top:0;width:8.6px;height:8.5px;background:#6a6a6a;"></div><div style="left:1.8px;top:1.6px;width:5px;height:5px;border-radius:3px;background:#f5a030;border:1px solid #7a4a10;"></div></div>
<div style="left:667.5px;top:908px;width:49.5px;height:20px;border:1px solid #3a3a3a;border-radius:4px;background:#8d8d8d;overflow:hidden;box-shadow:0 1px 0 rgba(255,255,255,.12);"><div style="left:8.6px;top:0;width:1px;height:18px;background:#4a4a4a;"></div><div style="left:18.2px;top:0;width:1px;height:18px;background:#4a4a4a;"></div><div style="left:27.8px;top:0;width:1px;height:18px;background:#4a4a4a;"></div><div style="left:37.4px;top:0;width:1px;height:18px;background:#4a4a4a;"></div><div style="left:0;top:8.5px;width:48px;height:1px;background:#4a4a4a;"></div></div>
<div class="menu" style="left:722px;top:908px;width:19.5px;height:20px;background:#5c5c5c;padding:0;"></div>
<svg style="left:724px;top:910px;" width="16" height="16" viewBox="0 0 16 16"><rect x="1.5" y="2.5" width="10.5" height="10" rx="1" fill="#d4d4d4" stroke="#222" stroke-width="1"/><path d="M12 6.2 A1.8 1.8 0 0 1 12 10 M12 9 A1.8 1.8 0 0 1 12 13.4" fill="none" stroke="#f2f2f2" stroke-width="1.6"/><path d="M12 6.2 A1.8 1.8 0 0 1 12 10 M12 9 A1.8 1.8 0 0 1 12 13.4" fill="none" stroke="#222" stroke-width=".5"/></svg>
<div class="btn" style="left:747px;top:908px;width:19.5px;height:20px;padding:0;"></div>
<svg style="left:749px;top:910px;" width="16" height="16" viewBox="0 0 16 16"><circle cx="8" cy="8" r="5.6" fill="none" stroke="#bdbdbd" stroke-width="1.4"/><circle cx="8" cy="8" r="2.6" fill="none" stroke="#bdbdbd" stroke-width="1.4"/></svg>
<div class="btn rr" style="left:772.5px;top:908px;width:19px;height:20px;padding:0;"></div>
<svg style="left:774px;top:910px;" width="16" height="16" viewBox="0 0 16 16"><g transform="rotate(225 8 8)"><path d="M4.2 2.2 V8.6 A3.8 3.8 0 0 0 11.8 8.6 V2.2" fill="none" stroke="#4a4a4a" stroke-width="4"/><path d="M4.2 2.6 V8.6 A3.8 3.8 0 0 0 11.8 8.6 V2.6" fill="none" stroke="#a6a6a6" stroke-width="2.6"/><path d="M2.9 4.4 H5.5 M10.5 4.4 H13.1" stroke="#4a4a4a" stroke-width=".8"/></g></svg>
<div class="menu rl rr" style="left:791px;top:908px;width:32.5px;height:20px;padding:0;"></div>
<svg style="left:794px;top:910px;" width="16" height="16" viewBox="0 0 16 16"><path d="M3 4 V12 M8 2 V14 M13 4 V12 M5.5 6 V10 M10.5 6 V10 M1 8 H15" stroke="#f2f2f2" stroke-width="1.3" fill="none"/></svg>
<svg style="left:812.7px;top:911px;" width="14" height="14" viewBox="0 0 16 16"><path d="M1.85 6.6 L5 0.6 L8.15 6.6Z M1.85 9.4 L5 15.4 L8.15 9.4Z" fill="#b0b0b0" stroke="#333" stroke-width=".5"/></svg>
<div class="btn rl" style="left:823.5px;top:908px;width:20px;height:20px;padding:0;"></div>
<svg style="left:825.5px;top:910px;" width="16" height="16" viewBox="0 0 16 16"><path d="M5 1 V15 M11 5 V15 M1 10 H15 M7 5 H15" stroke="#1e1e1e" stroke-width="1.2" fill="none" stroke-dasharray="2.2 1"/><circle cx="6" cy="5" r="3.6" fill="#fff" stroke="#2d57a8" stroke-width="1.3"/><circle cx="6" cy="5" r="1.5" fill="#2d57a8"/></svg>
<div class="btn rr" style="left:849px;top:908px;width:19.5px;height:20px;padding:0;"></div>
<svg style="left:851px;top:910px;" width="16" height="16" viewBox="0 0 16 16"><rect x="1.5" y="5" width="12.5" height="9" rx="1" fill="#d8d8d8" stroke="#222" stroke-width="1"/><rect x="3.5" y="3" width="4" height="2.4" fill="#bbb" stroke="#222" stroke-width=".8"/><circle cx="8" cy="9.6" r="3" fill="#555" stroke="#111" stroke-width=".9"/><circle cx="8" cy="9.6" r="1.2" fill="#c44"/><path d="M13.5 0.6 L14.2 2.6 L16 3.2 L14.2 3.9 L13.5 6 L12.8 3.9 L11 3.2 L12.8 2.6Z" fill="#ffe24a"/></svg>
<div class="btn rl" style="left:868.5px;top:908px;width:20px;height:20px;padding:0;"></div>
<svg style="left:870.5px;top:910px;" width="16" height="16" viewBox="0 0 16 16"><rect x="2" y="6.6" width="12" height="7.6" fill="#e8e8e8" stroke="#222" stroke-width="1"/><path d="M1.6 5.8 L13.4 2 L14 4 L2.4 7.8Z" fill="#333" stroke="#111" stroke-width=".6"/><path d="M4 5.2 L5 7 M7 4.2 L8 6 M10 3.2 L11 5" stroke="#fff" stroke-width="1.2"/><path d="M4 9.2 H12 M4 11.4 H12" stroke="#555" stroke-width="1"/></svg>
<div class="reg" style="left:8px;top:932px;width:1650px;height:64px;"></div>
<div class="" style="left:8px;top:932px;width:8px;height:46px;background:#4e4e4e;"></div>
<div style="left:16px;top:932px;width:1642px;height:46px;background-image:repeating-linear-gradient(90deg,#5c5c5c 0 1px,transparent 1px 38.585px),repeating-linear-gradient(90deg,#6a6a6a 0 1px,transparent 1px 38.585px);background-position:30.5px 0,11.2px 0;"></div>
<svg style="left:1646px;top:933px" width="12" height="12" viewBox="0 0 12 12"><path d="M0.6 0 L12 11.4 M4.2 0 L12 7.8 M7.8 0 L12 4.2" stroke="#2a2a2a" stroke-width="1.1"/><path d="M2.2 0 L12 9.8 M5.8 0 L12 6.2 M9.4 0 L12 2.6" stroke="#a8a8a8" stroke-width="1.1"/></svg>
<div class="" style="left:13px;top:979px;width:1640px;height:13px;background:#5c5c5c;border-radius:7px;border:1px solid #4a4a4a;"></div>
<div class="" style="left:33px;top:979px;width:1361px;height:13px;background:linear-gradient(#bdbdbd,#9a9a9a);border-radius:7px;border:1px solid #444;"></div>
<div class="" style="left:34px;top:981px;width:9px;height:9px;background:#7c7c7c;border-radius:5px;border:1px solid #666;"></div>
<div class="" style="left:1388px;top:981px;width:9px;height:9px;background:#8a8a8a;border-radius:5px;opacity:.5;"></div>
<div class="t" style="left:29.2px;top:978.6px;width:40px;text-align:center;">5</div>
<div class="t" style="left:67.5px;top:978.6px;width:40px;text-align:center;">10</div>
<div class="t" style="left:105.9px;top:978.6px;width:40px;text-align:center;">15</div>
<div class="t" style="left:144.2px;top:978.6px;width:40px;text-align:center;">20</div>
<div class="t" style="left:182.6px;top:978.6px;width:40px;text-align:center;">25</div>
<div class="t" style="left:220.9px;top:978.6px;width:40px;text-align:center;">30</div>
<div class="t" style="left:259.2px;top:978.6px;width:40px;text-align:center;">35</div>
<div class="t" style="left:297.6px;top:978.6px;width:40px;text-align:center;">40</div>
<div class="t" style="left:335.9px;top:978.6px;width:40px;text-align:center;">45</div>
<div class="t" style="left:374.3px;top:978.6px;width:40px;text-align:center;">50</div>
<div class="t" style="left:412.6px;top:978.6px;width:40px;text-align:center;">55</div>
<div class="t" style="left:450.9px;top:978.6px;width:40px;text-align:center;">60</div>
<div class="t" style="left:489.3px;top:978.6px;width:40px;text-align:center;">65</div>
<div class="t" style="left:527.6px;top:978.6px;width:40px;text-align:center;">70</div>
<div class="t" style="left:566.0px;top:978.6px;width:40px;text-align:center;">75</div>
<div class="t" style="left:604.3px;top:978.6px;width:40px;text-align:center;">80</div>
<div class="t" style="left:642.6px;top:978.6px;width:40px;text-align:center;">85</div>
<div class="t" style="left:681.0px;top:978.6px;width:40px;text-align:center;">90</div>
<div class="t" style="left:719.3px;top:978.6px;width:40px;text-align:center;">95</div>
<div class="t" style="left:757.7px;top:978.6px;width:40px;text-align:center;">100</div>
<div class="t" style="left:796.0px;top:978.6px;width:40px;text-align:center;">105</div>
<div class="t" style="left:834.3px;top:978.6px;width:40px;text-align:center;">110</div>
<div class="t" style="left:872.7px;top:978.6px;width:40px;text-align:center;">115</div>
<div class="t" style="left:911.0px;top:978.6px;width:40px;text-align:center;">120</div>
<div class="t" style="left:949.4px;top:978.6px;width:40px;text-align:center;">125</div>
<div class="t" style="left:987.7px;top:978.6px;width:40px;text-align:center;">130</div>
<div class="t" style="left:1026.0px;top:978.6px;width:40px;text-align:center;">135</div>
<div class="t" style="left:1064.4px;top:978.6px;width:40px;text-align:center;">140</div>
<div class="t" style="left:1102.7px;top:978.6px;width:40px;text-align:center;">145</div>
<div class="t" style="left:1141.1px;top:978.6px;width:40px;text-align:center;">150</div>
<div class="t" style="left:1179.4px;top:978.6px;width:40px;text-align:center;">155</div>
<div class="t" style="left:1217.7px;top:978.6px;width:40px;text-align:center;">160</div>
<div class="t" style="left:1256.1px;top:978.6px;width:40px;text-align:center;">165</div>
<div class="t" style="left:1294.4px;top:978.6px;width:40px;text-align:center;">170</div>
<div class="t" style="left:1332.8px;top:978.6px;width:40px;text-align:center;">175</div>
<div class="t" style="left:1371.1px;top:978.6px;width:40px;text-align:center;">180</div>
<div class="t" style="left:1409.4px;top:978.6px;width:40px;text-align:center;">185</div>
<div class="t" style="left:1447.8px;top:978.6px;width:40px;text-align:center;">190</div>
<div class="t" style="left:1486.1px;top:978.6px;width:40px;text-align:center;">195</div>
<div class="t" style="left:1524.5px;top:978.6px;width:40px;text-align:center;">200</div>
<div class="t" style="left:1562.8px;top:978.6px;width:40px;text-align:center;">205</div>
<div class="t" style="left:1601.1px;top:978.6px;width:40px;text-align:center;">210</div>
<div class="" style="left:8px;top:995px;width:1650px;height:1px;background:#858585;"></div>
<div class="reg" style="left:8px;top:996px;width:1650px;height:26px;"></div>
<svg style="left:8px;top:1010px" width="12" height="12" viewBox="0 0 12 12"><path d="M0 0.6 L11.4 12 M0 4.2 L7.8 12 M0 7.8 L4.2 12" stroke="#2a2a2a" stroke-width="1.1"/><path d="M0 2.2 L9.8 12 M0 5.8 L6.2 12 M0 9.4 L2.6 12" stroke="#a8a8a8" stroke-width="1.1"/></svg>
<div class="menu" style="left:18px;top:999px;width:32px;height:20px;"></div>
<svg style="left:21.5px;top:1001px;" width="16" height="16" viewBox="0 0 16 16"><circle cx="8" cy="8" r="6.2" fill="#f2f2f2" stroke="#333" stroke-width="1"/><path d="M8 8 L5 4.4 M8 8 L11.4 10" stroke="#c22" stroke-width="1.2"/><circle cx="8" cy="8" r=".9" fill="#222"/></svg>
<svg style="left:39.7px;top:1002px;" width="14" height="14" viewBox="0 0 16 16"><path d="M1.85 6.6 L5 0.6 L8.15 6.6Z M1.85 9.4 L5 15.4 L8.15 9.4Z" fill="#b0b0b0" stroke="#333" stroke-width=".5"/></svg>
<div class="t" style="left:62px;top:1002.5px;">View</div>
<div class="t" style="left:107px;top:1002.5px;">Marker</div>
<div class="t" style="left:162px;top:1002.5px;">Frame</div>
<div class="t" style="left:214px;top:1002.5px;">Playback</div>
<div class="btn rr" style="left:272px;top:999px;width:20px;height:20px;padding:0;"></div>
<svg style="left:274px;top:1001px;" width="16" height="16" viewBox="0 0 16 16"><circle cx="8" cy="8" r="6" fill="#f2f2f2" stroke="#333" stroke-width="1"/><path d="M8 8 V2 A6 6 0 0 1 14 8Z" fill="#f29a1f" stroke="#8a4a0c" stroke-width=".6"/><path d="M8 8 L12 11" stroke="#c22" stroke-width="1"/></svg>
<div class="btn rl" style="left:291.5px;top:999px;width:20px;height:20px;padding:0;"></div>
<svg style="left:293.5px;top:1001px;" width="16" height="16" viewBox="0 0 16 16"><path d="M5 8 V5.2 A3 3 0 0 1 11 5.2 V8" fill="none" stroke="#2a2a2a" stroke-width="2.6"/><path d="M5 8 V5.2 A3 3 0 0 1 11 5.2 V8" fill="none" stroke="#f0f0f0" stroke-width="1.4"/><rect x="3.2" y="7.6" width="9.6" height="6.8" rx=".8" fill="#e6e6e6" stroke="#222" stroke-width="1"/><path d="M8 10 V12.4" stroke="#333" stroke-width="1.4"/></svg>
<div class="num rr" style="left:317px;top:999px;width:117px;height:20px;"><div class="l">Start:</div><div class="r">1</div><svg style="left:5px;top:5px" width="6" height="8" viewBox="0 0 6 8"><path d="M5 0.6 V7.4 L0.8 4Z" fill="#666"/></svg><svg style="right:5px;top:5px" width="6" height="8" viewBox="0 0 6 8"><path d="M1 0.6 V7.4 L5.2 4Z" fill="#666"/></svg></div>
<div class="num rl" style="left:433px;top:999px;width:112px;height:20px;"><div class="l">End:</div><div class="r">250</div><svg style="left:5px;top:5px" width="6" height="8" viewBox="0 0 6 8"><path d="M5 0.6 V7.4 L0.8 4Z" fill="#666"/></svg><svg style="right:5px;top:5px" width="6" height="8" viewBox="0 0 6 8"><path d="M1 0.6 V7.4 L5.2 4Z" fill="#666"/></svg></div>
<div class="num" style="left:550px;top:999px;width:89.5px;height:20px;"><div class="l"></div><div class="r">0</div><svg style="left:5px;top:5px" width="6" height="8" viewBox="0 0 6 8"><path d="M5 0.6 V7.4 L0.8 4Z" fill="#666"/></svg><svg style="right:5px;top:5px" width="6" height="8" viewBox="0 0 6 8"><path d="M1 0.6 V7.4 L5.2 4Z" fill="#666"/></svg></div>
<div class="btn rr" style="left:656.0px;top:999px;width:20.4px;height:20px;padding:0;"></div>
<svg style="left:657.7px;top:1000.5px;" width="17" height="17" viewBox="0 0 16 16"><path d="M2.4 3 H4 V13 H2.4Z M4.4 8 L9 3.4 V12.6Z M9 8 L13.6 3.4 V12.6Z" fill="#ececec" stroke="#222" stroke-width=".9"/></svg>
<div class="btn rl rr" style="left:675.85px;top:999px;width:20.4px;height:20px;padding:0;"></div>
<svg style="left:677.5500000000001px;top:1000.5px;" width="17" height="17" viewBox="0 0 16 16"><path d="M2 8 L8 3 V13Z M8 8 L14 3 V13Z" fill="#ececec" stroke="#222" stroke-width=".9"/></svg>
<div class="btn rl rr" style="left:695.7px;top:999px;width:20.4px;height:20px;padding:0;"></div>
<svg style="left:697.4000000000001px;top:1000.5px;" width="17" height="17" viewBox="0 0 16 16"><path d="M2.6 8 L13 2.4 V13.6Z" fill="#ececec" stroke="#222" stroke-width=".9"/></svg>
<div class="btn rl rr" style="left:715.55px;top:999px;width:20.4px;height:20px;padding:0;"></div>
<svg style="left:717.25px;top:1000.5px;" width="17" height="17" viewBox="0 0 16 16"><path d="M13.4 8 L3 2.4 V13.6Z" fill="#ececec" stroke="#222" stroke-width=".9"/></svg>
<div class="btn rl rr" style="left:735.4px;top:999px;width:20.4px;height:20px;padding:0;"></div>
<svg style="left:737.1px;top:1000.5px;" width="17" height="17" viewBox="0 0 16 16"><path d="M14 8 L8 3 V13Z M8 8 L2 3 V13Z" fill="#ececec" stroke="#222" stroke-width=".9"/></svg>
<div class="btn rl" style="left:755.25px;top:999px;width:20.4px;height:20px;padding:0;"></div>
<svg style="left:756.95px;top:1000.5px;" width="17" height="17" viewBox="0 0 16 16"><path d="M13.6 3 H12 V13 H13.6Z M11.6 8 L7 3.4 V12.6Z M7 8 L2.4 3.4 V12.6Z" fill="#ececec" stroke="#222" stroke-width=".9"/></svg>
<div class="menu" style="left:781px;top:999px;width:114.5px;height:20px;">No Sync</div>
<svg style="left:885.7px;top:1002px;" width="14" height="14" viewBox="0 0 16 16"><path d="M1.85 6.6 L5 0.6 L8.15 6.6Z M1.85 9.4 L5 15.4 L8.15 9.4Z" fill="#b0b0b0" stroke="#333" stroke-width=".5"/></svg>
<div class="btn" style="left:912.5px;top:999px;width:19.5px;height:20px;padding:0;"></div>
<svg style="left:914.5px;top:1001px;" width="16" height="16" viewBox="0 0 16 16"><circle cx="8" cy="8" r="4.6" fill="#e33c1c" stroke="#7a1a0a" stroke-width="1"/><circle cx="6.8" cy="6.6" r="1.4" fill="#ff8b6a" opacity=".8"/></svg>
<div class="menu" style="left:937px;top:999px;width:32px;height:20px;padding:0;"></div>
<svg style="left:940px;top:1001px;" width="16" height="16" viewBox="0 0 16 16"><path d="M8 2.6 L13.4 8 L8 13.4 L2.6 8Z" fill="#f7b21e" stroke="#6a4a08" stroke-width=".9"/></svg>
<svg style="left:957.7px;top:1002px;" width="14" height="14" viewBox="0 0 16 16"><path d="M1.85 6.6 L5 0.6 L8.15 6.6Z M1.85 9.4 L5 15.4 L8.15 9.4Z" fill="#b0b0b0" stroke="#333" stroke-width=".5"/></svg>
<div class="txt rr" style="left:974.5px;top:999px;width:130.5px;height:20px;"></div>
<svg style="left:977px;top:1001px;" width="16" height="16" viewBox="0 0 16 16"><path d="M5 1 H7.2 V10" fill="none" stroke="#f7e9a0" stroke-width="1.6"/><path d="M4 1 H8 V2.4 H7.6 V9.6 H6 V2.4 H4Z" fill="none" stroke="#5a4a10" stroke-width=".6"/><circle cx="4.4" cy="11.6" r="2.4" fill="none" stroke="#f3d34a" stroke-width="1.5"/><path d="M6.4 10.4 L13 5.2 M10.6 7.2 L12 9 M12.4 5.8 L13.8 7.6" stroke="#e8e8e8" stroke-width="1.5"/></svg>
<div class="btn rl rr" style="left:1104.5px;top:999px;width:20.5px;height:20px;padding:0;"></div>
<svg style="left:1107px;top:1001px;" width="16" height="16" viewBox="0 0 16 16"><circle cx="4.6" cy="11.4" r="2.5" fill="none" stroke="#ececec" stroke-width="1.7"/><path d="M6.4 9.6 L13 3.2 M10.6 5.6 L12.4 7.4 M12.6 3.6 L14.4 5.4" stroke="#ececec" stroke-width="1.7"/><circle cx="4.6" cy="11.4" r="3.5" fill="none" stroke="#333" stroke-width=".5"/></svg>
<div class="btn rl" style="left:1124.5px;top:999px;width:20px;height:20px;padding:0;"></div>
<svg style="left:1126.5px;top:1001px;" width="16" height="16" viewBox="0 0 16 16"><circle cx="4.6" cy="11.4" r="2.5" fill="none" stroke="#ececec" stroke-width="1.7"/><path d="M6.4 9.6 L13 3.2 M10.6 5.6 L12.4 7.4" stroke="#ececec" stroke-width="1.7"/><path d="M2.4 2.4 L13.6 13.6" stroke="#d8262c" stroke-width="2"/><path d="M13 2.6 L8.4 7.4" stroke="#d8262c" stroke-width="1.6"/></svg>
<div class="" style="left:1658px;top:65px;width:1px;height:957px;background:#101010;"></div>
<div class="reg" style="left:1659px;top:65px;width:252px;height:165px;"></div>
<div class="" style="left:1659px;top:111.5px;width:252px;height:20px;background:#6e6e6e;"></div>
<div class="" style="left:1659px;top:151.5px;width:252px;height:20px;background:#6e6e6e;"></div>
<div class="" style="left:1659px;top:191.5px;width:252px;height:20px;background:#6e6e6e;"></div>
<div class="reg" style="left:1659px;top:211.5px;width:252px;height:18px;"></div>
<div class="reg" style="left:1659px;top:65px;width:252px;height:26px;border-bottom:1px solid #666;"></div>
<div class="menu" style="left:1668px;top:68px;width:32px;height:20px;"></div>
<svg style="left:1671px;top:70px;" width="16" height="16" viewBox="0 0 16 16"><rect x="1.4" y="1.4" width="5" height="3" fill="#f0a24a" stroke="#333" stroke-width=".7"/><path d="M3.6 4.6 V12.4 H7 M3.6 8 H7" fill="none" stroke="#222" stroke-width="1.1"/><rect x="7.4" y="6.6" width="6.4" height="2.6" fill="#ececec" stroke="#222" stroke-width=".7"/><rect x="7.4" y="11" width="6.4" height="2.6" fill="#ececec" stroke="#222" stroke-width=".7"/></svg>
<svg style="left:1689.7px;top:71px;" width="14" height="14" viewBox="0 0 16 16"><path d="M1.85 6.6 L5 0.6 L8.15 6.6Z M1.85 9.4 L5 15.4 L8.15 9.4Z" fill="#b0b0b0" stroke="#333" stroke-width=".5"/></svg>
<div class="t" style="left:1712px;top:71.5px;">View</div>
<div class="t" style="left:1757px;top:71.5px;">Search</div>
<div class="menu" style="left:1804px;top:68px;width:110px;height:20px;border-radius:4px 0 0 4px;border-right:0;width:107px;">All Scenes</div>
<svg style="left:1899px;top:65px" width="12" height="12" viewBox="0 0 12 12"><path d="M0.6 0 L12 11.4 M4.2 0 L12 7.8 M7.8 0 L12 4.2" stroke="#2a2a2a" stroke-width="1.1"/><path d="M2.2 0 L12 9.8 M5.8 0 L12 6.2 M9.4 0 L12 2.6" stroke="#a8a8a8" stroke-width="1.1"/></svg>
<div class="" style="left:1834.3px;top:91.5px;width:1px;height:122px;background:#666;"></div>
<div class="" style="left:1854.4px;top:91.5px;width:1px;height:122px;background:#666;"></div>
<div class="" style="left:1874.4px;top:91.5px;width:1px;height:122px;background:#666;"></div>
<div class="" style="left:1689px;top:111px;width:1px;height:102px;background:#4e4e4e;"></div>
<div class="" style="left:1675px;top:102.5px;width:16px;height:1px;background:#4e4e4e;"></div>
<div class="" style="left:1695px;top:162.5px;width:14px;height:1px;background:#4e4e4e;"></div>
<div class="" style="left:1695px;top:182.5px;width:14px;height:1px;background:#4e4e4e;"></div>
<div class="" style="left:1695px;top:202.5px;width:14px;height:1px;background:#4e4e4e;"></div>
<svg style="left:1665.0px;top:98.0px" width="9" height="9" viewBox="0 0 9 9"><circle cx="4.5" cy="4.5" r="3.9" fill="#e6e6e6" stroke="#1a1a1a" stroke-width=".9"/><path d="M2.2 4.5 H6.8" stroke="#111" stroke-width="1.1"/></svg>
<div class="" style="left:1680.5px;top:93px;width:19px;height:19px;background:#a2a2a8;border-radius:10px;opacity:.75;"></div>
<svg style="left:1682px;top:94.5px;" width="16" height="16" viewBox="0 0 16 16"><path d="M8.6 2.6 V10.8 A2.5 1.3 0 0 0 13.6 10.8 V2.6Z" fill="#4d7cc4" stroke="#1c355f" stroke-width=".8"/><path d="M9.6 3.4 V11" stroke="#a9c8f2" stroke-width="1.1"/><ellipse cx="11.1" cy="2.6" rx="2.5" ry="1.3" fill="#b5cdee" stroke="#1c355f" stroke-width=".6"/><circle cx="6.2" cy="11" r="3.7" fill="#cfcfcf" stroke="#1a1a1a" stroke-width=".9"/><circle cx="5.2" cy="9.8" r="1.7" fill="#fff" opacity=".85"/><circle cx="3.4" cy="3.4" r="1.7" fill="#e8e070" stroke="#a89c2a" stroke-width=".5"/></svg>
<div class="t" style="left:1702.5px;top:95.5px;letter-spacing:-0.6px;">Scene</div>
<svg style="left:1685.0px;top:118.0px" width="9" height="9" viewBox="0 0 9 9"><circle cx="4.5" cy="4.5" r="3.9" fill="#e6e6e6" stroke="#1a1a1a" stroke-width=".9"/><path d="M2.2 4.5 H6.8 M4.5 2.2 V6.8" stroke="#111" stroke-width="1.1"/></svg>
<svg style="left:1701px;top:113.5px;" width="17" height="17" viewBox="0 0 16 16"><rect x="5" y="4.4" width="9.4" height="9.6" fill="#e0d8b8" stroke="#333" stroke-width=".8" transform="rotate(12 9 9)"/><rect x="1.6" y="1.6" width="10" height="10" fill="#f4f4f4" stroke="#333" stroke-width=".9"/><rect x="5.4" y="3.2" width="3" height="5.6" rx="1.2" fill="#4c7fd0" stroke="#1f3d74" stroke-width=".6"/><circle cx="5" cy="8.8" r="1.7" fill="#cfcfcf" stroke="#444" stroke-width=".5"/><circle cx="3.2" cy="3.4" r=".9" fill="#ffe24a"/></svg>
<div class="t" style="left:1722.5px;top:115.5px;letter-spacing:-0.66px;">RenderLayers</div>
<div class="" style="left:1800.0px;top:116.5px;width:2px;height:12px;background:#4a4a4a;"></div>
<svg style="left:1811px;top:113.5px;" width="17" height="17" viewBox="0 0 16 16"><rect x="5" y="4.4" width="9.4" height="9.6" fill="#e0d8b8" stroke="#333" stroke-width=".8" transform="rotate(12 9 9)"/><rect x="1.6" y="1.6" width="10" height="10" fill="#f4f4f4" stroke="#333" stroke-width=".9"/><rect x="5.4" y="3.2" width="3" height="5.6" rx="1.2" fill="#4c7fd0" stroke="#1f3d74" stroke-width=".6"/><circle cx="5" cy="8.8" r="1.7" fill="#cfcfcf" stroke="#444" stroke-width=".5"/><circle cx="3.2" cy="3.4" r=".9" fill="#ffe24a"/></svg>
<svg style="left:1702px;top:134.5px;" width="16" height="16" viewBox="0 0 16 16"><circle cx="8" cy="8" r="7.6" fill="#a0a4ae" opacity=".55"/><circle cx="8" cy="8" r="6" fill="#4f86cc" stroke="#16274a" stroke-width="1"/><path d="M4.4 5 Q6 3 8.4 3.6 Q8.8 5.2 7.2 6.2 Q6.8 8 5.2 8.2 Q3.8 7 4.4 5Z M9.6 7.6 Q11.8 6.8 12.6 8.8 Q12 11.4 10 12 Q8.8 10 9.6 7.6Z M7 10.4 Q8 10 8.2 11.6 Q7.4 12.6 6.6 11.8Z" fill="#3f8f3a"/><path d="M3.6 5.4 A5.4 5.4 0 0 1 11 3.2" fill="none" stroke="#e4efff" stroke-width="1.1" opacity=".75"/></svg>
<div class="t" style="left:1722.5px;top:135.5px;letter-spacing:-0.55px;">World</div>
<svg style="left:1685.0px;top:158.0px" width="9" height="9" viewBox="0 0 9 9"><circle cx="4.5" cy="4.5" r="3.9" fill="#e6e6e6" stroke="#1a1a1a" stroke-width=".9"/><path d="M2.2 4.5 H6.8 M4.5 2.2 V6.8" stroke="#111" stroke-width="1.1"/></svg>
<svg style="left:1702px;top:153.2px;" width="16" height="16" viewBox="0 0 16 16"><path d="M2.8 3.4 H13.2 L8 13.4Z" fill="none" stroke="#7a3f08" stroke-width="2.6" stroke-linejoin="round"/><path d="M2.8 3.4 H13.2 L8 13.4Z" fill="none" stroke="#f5a040" stroke-width="1.5" stroke-linejoin="round"/><circle cx="2.8" cy="3.4" r="1.1" fill="#fff2dc"/><circle cx="13.2" cy="3.4" r="1.1" fill="#fff2dc"/><circle cx="8" cy="13.4" r="1.1" fill="#fff2dc"/></svg>
<div class="t" style="left:1722.5px;top:155.5px;letter-spacing:-0.5px;">Plane</div>
<div class="" style="left:1759.0px;top:156.5px;width:2px;height:12px;background:#4a4a4a;"></div>
<svg style="left:1771px;top:153.5px;" width="16" height="16" viewBox="0 0 16 16"><path d="M2.8 3.4 H13.2 L8 13.2Z" fill="none" stroke="#a2a2a2" stroke-width="1.3"/><circle cx="2.8" cy="3.4" r="1.7" fill="#e8e8e8" stroke="#2a2a2a" stroke-width=".7"/><circle cx="13.2" cy="3.4" r="1.7" fill="#e8e8e8" stroke="#2a2a2a" stroke-width=".7"/><circle cx="8" cy="13.2" r="1.7" fill="#e8e8e8" stroke="#2a2a2a" stroke-width=".7"/></svg>
<svg style="left:1837px;top:153.8px;" width="15.5" height="15.5" viewBox="0 0 16 16"><path d="M0.8 8 Q8 0.6 15.2 8 Q8 14.4 0.8 8Z" fill="#f4f4f4" stroke="#1a1a1a" stroke-width="1.1"/><circle cx="8" cy="7.6" r="3" fill="#8a8a8a"/><circle cx="8" cy="7.2" r="1.4" fill="#111"/></svg>
<svg style="left:1858px;top:153.7px;" width="15" height="15" viewBox="0 0 16 16"><path d="M3.6 1 V13 L6.6 10.2 L8.8 15 L11 14 L8.8 9.4 H12.8Z" fill="#f6f6f6" stroke="#0c0c0c" stroke-width="1.1" stroke-linejoin="round"/></svg>
<svg style="left:1877.3px;top:153.9px;" width="15" height="15" viewBox="0 0 16 16"><rect x="1.4" y="4.4" width="13.2" height="9.8" rx=".8" fill="#ececec" stroke="#111" stroke-width="1.4"/><rect x="3.2" y="2.2" width="4.2" height="2.6" fill="#ddd" stroke="#111" stroke-width="1"/><circle cx="8.4" cy="9.4" r="3.3" fill="#3a3a3a" stroke="#111" stroke-width=".8"/><circle cx="8.4" cy="9.4" r="1.5" fill="#c23a4a"/><rect x="11.6" y="5.6" width="2" height="1.4" fill="#555"/></svg>
<svg style="left:1685.0px;top:178.0px" width="9" height="9" viewBox="0 0 9 9"><circle cx="4.5" cy="4.5" r="3.9" fill="#e6e6e6" stroke="#1a1a1a" stroke-width=".9"/><path d="M2.2 4.5 H6.8 M4.5 2.2 V6.8" stroke="#111" stroke-width="1.1"/></svg>
<svg style="left:1702px;top:173.2px;" width="16" height="16" viewBox="0 0 16 16"><path d="M2.8 3.4 H13.2 L8 13.4Z" fill="none" stroke="#7a3f08" stroke-width="2.6" stroke-linejoin="round"/><path d="M2.8 3.4 H13.2 L8 13.4Z" fill="none" stroke="#f5a040" stroke-width="1.5" stroke-linejoin="round"/><circle cx="2.8" cy="3.4" r="1.1" fill="#fff2dc"/><circle cx="13.2" cy="3.4" r="1.1" fill="#fff2dc"/><circle cx="8" cy="13.4" r="1.1" fill="#fff2dc"/></svg>
<div class="t" style="left:1722.5px;top:175.5px;letter-spacing:-0.5px;">Plane.001</div>
<div class="" style="left:1783.0px;top:176.5px;width:2px;height:12px;background:#4a4a4a;"></div>
<svg style="left:1795px;top:173.5px;" width="16" height="16" viewBox="0 0 16 16"><path d="M2.8 3.4 H13.2 L8 13.2Z" fill="none" stroke="#a2a2a2" stroke-width="1.3"/><circle cx="2.8" cy="3.4" r="1.7" fill="#e8e8e8" stroke="#2a2a2a" stroke-width=".7"/><circle cx="13.2" cy="3.4" r="1.7" fill="#e8e8e8" stroke="#2a2a2a" stroke-width=".7"/><circle cx="8" cy="13.2" r="1.7" fill="#e8e8e8" stroke="#2a2a2a" stroke-width=".7"/></svg>
<svg style="left:1815px;top:173.5px;" width="16" height="16" viewBox="0 0 16 16"><path d="M2.2 12 L8.4 5.8 A3.4 3.4 0 0 1 12.6 1.8 L10.4 4 L12 5.6 L14.2 3.4 A3.4 3.4 0 0 1 10.2 7.6 L4 13.8 A1.27 1.27 0 0 1 2.2 12Z" fill="#7fa8e4" stroke="#1b3566" stroke-width="1"/><path d="M3.4 12.4 L9.4 6.4" stroke="#dbe8fb" stroke-width=".9"/></svg>
<svg style="left:1837px;top:173.8px;" width="15.5" height="15.5" viewBox="0 0 16 16"><path d="M0.8 8 Q8 0.6 15.2 8 Q8 14.4 0.8 8Z" fill="#f4f4f4" stroke="#1a1a1a" stroke-width="1.1"/><circle cx="8" cy="7.6" r="3" fill="#8a8a8a"/><circle cx="8" cy="7.2" r="1.4" fill="#111"/></svg>
<svg style="left:1858px;top:173.7px;" width="15" height="15" viewBox="0 0 16 16"><path d="M3.6 1 V13 L6.6 10.2 L8.8 15 L11 14 L8.8 9.4 H12.8Z" fill="#f6f6f6" stroke="#0c0c0c" stroke-width="1.1" stroke-linejoin="round"/></svg>
<svg style="left:1877.3px;top:173.9px;" width="15" height="15" viewBox="0 0 16 16"><rect x="1.4" y="4.4" width="13.2" height="9.8" rx=".8" fill="#ececec" stroke="#111" stroke-width="1.4"/><rect x="3.2" y="2.2" width="4.2" height="2.6" fill="#ddd" stroke="#111" stroke-width="1"/><circle cx="8.4" cy="9.4" r="3.3" fill="#3a3a3a" stroke="#111" stroke-width=".8"/><circle cx="8.4" cy="9.4" r="1.5" fill="#c23a4a"/><rect x="11.6" y="5.6" width="2" height="1.4" fill="#555"/></svg>
<svg style="left:1685.0px;top:198.0px" width="9" height="9" viewBox="0 0 9 9"><circle cx="4.5" cy="4.5" r="3.9" fill="#e6e6e6" stroke="#1a1a1a" stroke-width=".9"/><path d="M2.2 4.5 H6.8 M4.5 2.2 V6.8" stroke="#111" stroke-width="1.1"/></svg>
<svg style="left:1702px;top:193.2px;" width="16" height="16" viewBox="0 0 16 16"><path d="M2.8 3.4 H13.2 L8 13.4Z" fill="none" stroke="#7a3f08" stroke-width="2.6" stroke-linejoin="round"/><path d="M2.8 3.4 H13.2 L8 13.4Z" fill="none" stroke="#f5a040" stroke-width="1.5" stroke-linejoin="round"/><circle cx="2.8" cy="3.4" r="1.1" fill="#fff2dc"/><circle cx="13.2" cy="3.4" r="1.1" fill="#fff2dc"/><circle cx="8" cy="13.4" r="1.1" fill="#fff2dc"/></svg>
<div class="t" style="left:1722.5px;top:195.5px;letter-spacing:-0.5px;">Plane.002</div>
<div class="" style="left:1783.0px;top:196.5px;width:2px;height:12px;background:#4a4a4a;"></div>
<svg style="left:1795px;top:193.5px;" width="16" height="16" viewBox="0 0 16 16"><path d="M2.8 3.4 H13.2 L8 13.2Z" fill="none" stroke="#a2a2a2" stroke-width="1.3"/><circle cx="2.8" cy="3.4" r="1.7" fill="#e8e8e8" stroke="#2a2a2a" stroke-width=".7"/><circle cx="13.2" cy="3.4" r="1.7" fill="#e8e8e8" stroke="#2a2a2a" stroke-width=".7"/><circle cx="8" cy="13.2" r="1.7" fill="#e8e8e8" stroke="#2a2a2a" stroke-width=".7"/></svg>
<svg style="left:1837px;top:193.8px;" width="15.5" height="15.5" viewBox="0 0 16 16"><path d="M0.8 8 Q8 0.6 15.2 8 Q8 14.4 0.8 8Z" fill="#f4f4f4" stroke="#1a1a1a" stroke-width="1.1"/><circle cx="8" cy="7.6" r="3" fill="#8a8a8a"/><circle cx="8" cy="7.2" r="1.4" fill="#111"/></svg>
<svg style="left:1858px;top:193.7px;" width="15" height="15" viewBox="0 0 16 16"><path d="M3.6 1 V13 L6.6 10.2 L8.8 15 L11 14 L8.8 9.4 H12.8Z" fill="#f6f6f6" stroke="#0c0c0c" stroke-width="1.1" stroke-linejoin="round"/></svg>
<svg style="left:1877.3px;top:193.9px;" width="15" height="15" viewBox="0 0 16 16"><rect x="1.4" y="4.4" width="13.2" height="9.8" rx=".8" fill="#ececec" stroke="#111" stroke-width="1.4"/><rect x="3.2" y="2.2" width="4.2" height="2.6" fill="#ddd" stroke="#111" stroke-width="1"/><circle cx="8.4" cy="9.4" r="3.3" fill="#3a3a3a" stroke="#111" stroke-width=".8"/><circle cx="8.4" cy="9.4" r="1.5" fill="#c23a4a"/><rect x="11.6" y="5.6" width="2" height="1.4" fill="#555"/></svg>
<div class="" style="left:1894.5px;top:96px;width:12.5px;height:112px;background:#5c5c5c;border-radius:6px;"></div>
<div class="" style="left:1894.5px;top:96px;width:12.5px;height:75px;background:linear-gradient(90deg,#888,#777);border-radius:6px;border:1px solid #555;"></div>
<div class="" style="left:1663.5px;top:213.5px;width:225.5px;height:12px;background:#5c5c5c;border-radius:6px;"></div>
<div class="" style="left:1663.5px;top:213.5px;width:176px;height:12px;background:linear-gradient(#8a8a8a,#7a7a7a);border-radius:6px;border:1px solid #555;"></div>
<svg style="left:1660px;top:218px" width="12" height="12" viewBox="0 0 12 12"><path d="M0 0.6 L11.4 12 M0 4.2 L7.8 12 M0 7.8 L4.2 12" stroke="#2a2a2a" stroke-width="1.1"/><path d="M0 2.2 L9.8 12 M0 5.8 L6.2 12 M0 9.4 L2.6 12" stroke="#a8a8a8" stroke-width="1.1"/></svg>
<div class="hl" style="left:1659px;top:229.5px;width:252px;height:1.5px;"></div>
<div class="reg" style="left:1659px;top:231px;width:252px;height:791px;"></div>
<div class="reg" style="left:1659px;top:231px;width:252px;height:26.5px;border-bottom:1px solid #696969;"></div>
<svg style="left:1899px;top:231px" width="12" height="12" viewBox="0 0 12 12"><path d="M0.6 0 L12 11.4 M4.2 0 L12 7.8 M7.8 0 L12 4.2" stroke="#2a2a2a" stroke-width="1.1"/><path d="M2.2 0 L12 9.8 M5.8 0 L12 6.2 M9.4 0 L12 2.6" stroke="#a8a8a8" stroke-width="1.1"/></svg>
<div class="menu" style="left:1668px;top:234px;width:32px;height:20px;"></div>
<svg style="left:1671px;top:236px;" width="16" height="16" viewBox="0 0 16 16"><rect x="2" y="3" width="12" height="4" rx="1.4" fill="#ececec" stroke="#222" stroke-width=".9"/><rect x="2" y="9.4" width="12" height="4" rx="1.4" fill="#ececec" stroke="#222" stroke-width=".9"/><rect x="8.6" y="3.6" width="4" height="2.8" fill="#333"/><rect x="3.2" y="10" width="4" height="2.8" fill="#333"/></svg>
<svg style="left:1689.7px;top:237px;" width="14" height="14" viewBox="0 0 16 16"><path d="M1.85 6.6 L5 0.6 L8.15 6.6Z M1.85 9.4 L5 15.4 L8.15 9.4Z" fill="#b0b0b0" stroke="#333" stroke-width=".5"/></svg>
<div class="menu rr" style="left:1708.4px;top:234px;width:20.5px;height:20px;background:linear-gradient(#626262,#555);padding:0;"></div>
<svg style="left:1710.7px;top:236px;opacity:.72;" width="16" height="16" viewBox="0 0 16 16"><rect x="1.4" y="4.4" width="13.2" height="9.8" rx=".8" fill="#ececec" stroke="#111" stroke-width="1.4"/><rect x="3.2" y="2.2" width="4.2" height="2.6" fill="#ddd" stroke="#111" stroke-width="1"/><circle cx="8.4" cy="9.4" r="3.3" fill="#3a3a3a" stroke="#111" stroke-width=".8"/><circle cx="8.4" cy="9.4" r="1.5" fill="#c23a4a"/><rect x="11.6" y="5.6" width="2" height="1.4" fill="#555"/></svg>
<div class="menu rl rr" style="left:1728.42px;top:234px;width:20.5px;height:20px;background:linear-gradient(#626262,#555);padding:0;"></div>
<svg style="left:1730.72px;top:236px;opacity:.72;" width="16" height="16" viewBox="0 0 16 16"><rect x="5" y="4.4" width="9.4" height="9.6" fill="#e0d8b8" stroke="#333" stroke-width=".8" transform="rotate(12 9 9)"/><rect x="1.6" y="1.6" width="10" height="10" fill="#f4f4f4" stroke="#333" stroke-width=".9"/><rect x="5.4" y="3.2" width="3" height="5.6" rx="1.2" fill="#4c7fd0" stroke="#1f3d74" stroke-width=".6"/><circle cx="5" cy="8.8" r="1.7" fill="#cfcfcf" stroke="#444" stroke-width=".5"/><circle cx="3.2" cy="3.4" r=".9" fill="#ffe24a"/></svg>
<div class="menu rl rr" style="left:1748.44px;top:234px;width:20.5px;height:20px;background:linear-gradient(#626262,#555);padding:0;"></div>
<svg style="left:1750.74px;top:236px;opacity:.72;" width="16" height="16" viewBox="0 0 16 16"><path d="M8.6 2.6 V10.8 A2.5 1.3 0 0 0 13.6 10.8 V2.6Z" fill="#4d7cc4" stroke="#1c355f" stroke-width=".8"/><path d="M9.6 3.4 V11" stroke="#a9c8f2" stroke-width="1.1"/><ellipse cx="11.1" cy="2.6" rx="2.5" ry="1.3" fill="#b5cdee" stroke="#1c355f" stroke-width=".6"/><circle cx="6.2" cy="11" r="3.7" fill="#cfcfcf" stroke="#1a1a1a" stroke-width=".9"/><circle cx="5.2" cy="9.8" r="1.7" fill="#fff" opacity=".85"/><circle cx="3.4" cy="3.4" r="1.7" fill="#e8e070" stroke="#a89c2a" stroke-width=".5"/></svg>
<div class="menu rl rr" style="left:1768.46px;top:234px;width:20.5px;height:20px;background:linear-gradient(#626262,#555);padding:0;"></div>
<svg style="left:1770.76px;top:236px;opacity:.72;" width="16" height="16" viewBox="0 0 16 16"><circle cx="8" cy="8" r="7.6" fill="#a0a4ae" opacity=".55"/><circle cx="8" cy="8" r="6" fill="#4f86cc" stroke="#16274a" stroke-width="1"/><path d="M4.4 5 Q6 3 8.4 3.6 Q8.8 5.2 7.2 6.2 Q6.8 8 5.2 8.2 Q3.8 7 4.4 5Z M9.6 7.6 Q11.8 6.8 12.6 8.8 Q12 11.4 10 12 Q8.8 10 9.6 7.6Z M7 10.4 Q8 10 8.2 11.6 Q7.4 12.6 6.6 11.8Z" fill="#3f8f3a"/><path d="M3.6 5.4 A5.4 5.4 0 0 1 11 3.2" fill="none" stroke="#e4efff" stroke-width="1.1" opacity=".75"/></svg>
<div class="menu rl rr" style="left:1788.48px;top:234px;width:20.5px;height:20px;background:linear-gradient(#626262,#555);padding:0;"></div>
<svg style="left:1790.78px;top:236px;opacity:.72;" width="16" height="16" viewBox="0 0 16 16"><path d="M2 4.5 L8 2 L14 4.5 L14 11.5 L8 14.5 L2 11.5Z" fill="#f0a24a" stroke="#8a4a0c" stroke-width=".9"/><path d="M2 4.5 L8 7 L14 4.5 L8 2Z" fill="#fbd9a6"/><path d="M8 7 L14 4.5 V11.5 L8 14.5Z" fill="#c97620"/><path d="M2 4.5 L8 7 L14 4.5 M8 7 V14.5" stroke="#8a4a0c" stroke-width=".7" fill="none"/></svg>
<div class="menu rl rr" style="left:1808.5px;top:234px;width:20.5px;height:20px;background:linear-gradient(#626262,#555);padding:0;"></div>
<svg style="left:1810.8px;top:236px;opacity:.72;" width="16" height="16" viewBox="0 0 16 16"><rect x="1.6" y="6.6" width="7.6" height="4.6" rx="2.3" fill="none" stroke="#d2d2d2" stroke-width="1.7" transform="rotate(-35 5.4 8.9)"/><rect x="6.8" y="4.8" width="7.6" height="4.6" rx="2.3" fill="none" stroke="#d2d2d2" stroke-width="1.7" transform="rotate(-35 10.6 7.1)"/></svg>
<div class="menu rl rr" style="left:1828.52px;top:234px;width:20.5px;height:20px;background:#5680c2;padding:0;"></div>
<svg style="left:1830.82px;top:236px;" width="16" height="16" viewBox="0 0 16 16"><path d="M2.2 12 L8.4 5.8 A3.4 3.4 0 0 1 12.6 1.8 L10.4 4 L12 5.6 L14.2 3.4 A3.4 3.4 0 0 1 10.2 7.6 L4 13.8 A1.27 1.27 0 0 1 2.2 12Z" fill="#e8f0ff" stroke="#1f3d74" stroke-width=".8"/></svg>
<div class="menu rl rr" style="left:1848.54px;top:234px;width:20.5px;height:20px;background:linear-gradient(#626262,#555);padding:0;"></div>
<svg style="left:1850.84px;top:236px;opacity:.72;" width="16" height="16" viewBox="0 0 16 16"><path d="M2.8 3.4 H13.2 L8 13.2Z" fill="none" stroke="#a2a2a2" stroke-width="1.3"/><circle cx="2.8" cy="3.4" r="1.7" fill="#e8e8e8" stroke="#2a2a2a" stroke-width=".7"/><circle cx="13.2" cy="3.4" r="1.7" fill="#e8e8e8" stroke="#2a2a2a" stroke-width=".7"/><circle cx="8" cy="13.2" r="1.7" fill="#e8e8e8" stroke="#2a2a2a" stroke-width=".7"/></svg>
<div class="menu rl rr" style="left:1868.5600000000002px;top:234px;width:20.5px;height:20px;background:linear-gradient(#626262,#555);padding:0;"></div>
<svg style="left:1870.8600000000001px;top:236px;opacity:.72;" width="16" height="16" viewBox="0 0 16 16"><circle cx="8" cy="8" r="6.2" fill="#8f8f8f" stroke="#333" stroke-width=".8"/><path d="M8 8 L1.8 8 A6.2 6.2 0 0 0 8 14.2Z M8 8 V1.8 A6.2 6.2 0 0 1 14.2 8Z" fill="#c46a5a" opacity=".75"/><circle cx="6" cy="5.6" r="1.6" fill="#fff" opacity=".5"/></svg>
<div class="menu rl rr" style="left:1888.5800000000002px;top:234px;width:23px;height:20px;background:linear-gradient(#626262,#555);padding:0;border-right:0;border-radius:0;"></div>
<svg style="left:1890.88px;top:236px;opacity:.72;" width="16" height="16" viewBox="0 0 16 16"><rect x="1.6" y="1.6" width="12.8" height="12.8" fill="#f2e4e0" stroke="#333" stroke-width=".8"/><path d="M1.6 1.6 h3.2 v3.2 h-3.2z M8 1.6 h3.2 v3.2 h-3.2z M4.8 4.8 h3.2 v3.2 h-3.2z M11.2 4.8 h3.2 v3.2 h-3.2z M1.6 8 h3.2 v3.2 h-3.2z M8 8 h3.2 v3.2 h-3.2z M4.8 11.2 h3.2 v3.2 h-3.2z M11.2 11.2 h3.2 v3.2 h-3.2z" fill="#c8504a"/></svg>
<svg style="left:1669px;top:267px;" width="16" height="16" viewBox="0 0 16 16"><path d="M9 2 L14 7 L12.4 7.4 L10.4 9.4 L10.2 12 L4 5.8 L6.6 5.6 L8.6 3.6Z" fill="#e4e4e4" stroke="#222" stroke-width=".9"/><path d="M7 9 L2 14" stroke="#222" stroke-width="1.3"/></svg>
<svg style="left:1690px;top:267px;" width="15" height="15" viewBox="0 0 16 16"><path d="M8.6 2.6 V10.8 A2.5 1.3 0 0 0 13.6 10.8 V2.6Z" fill="#4d7cc4" stroke="#1c355f" stroke-width=".8"/><path d="M9.6 3.4 V11" stroke="#a9c8f2" stroke-width="1.1"/><ellipse cx="11.1" cy="2.6" rx="2.5" ry="1.3" fill="#b5cdee" stroke="#1c355f" stroke-width=".6"/><circle cx="6.2" cy="11" r="3.7" fill="#cfcfcf" stroke="#1a1a1a" stroke-width=".9"/><circle cx="5.2" cy="9.8" r="1.7" fill="#fff" opacity=".85"/><circle cx="3.4" cy="3.4" r="1.7" fill="#e8e070" stroke="#a89c2a" stroke-width=".5"/></svg>
<svg style="left:1711px;top:271px" width="5" height="8" viewBox="0 0 5 8"><path d="M0.6 0.6 V7.4 L4.6 4Z" fill="#333"/></svg>
<svg style="left:1730.5px;top:268px;" width="14" height="14" viewBox="0 0 16 16"><path d="M2 4.5 L8 2 L14 4.5 L14 11.5 L8 14.5 L2 11.5Z" fill="#f0a24a" stroke="#8a4a0c" stroke-width=".9"/><path d="M2 4.5 L8 7 L14 4.5 L8 2Z" fill="#fbd9a6"/><path d="M8 7 L14 4.5 V11.5 L8 14.5Z" fill="#c97620"/><path d="M2 4.5 L8 7 L14 4.5 M8 7 V14.5" stroke="#8a4a0c" stroke-width=".7" fill="none"/></svg>
<div class="t" style="left:1751.5px;top:268.5px;">Plane.005</div>
<div class="menu" style="left:1667px;top:301px;width:236px;height:20px;letter-spacing:-0.62px;">Add Modifier</div>
<svg style="left:1892.7px;top:304px;" width="14" height="14" viewBox="0 0 16 16"><path d="M1.85 6.6 L5 0.6 L8.15 6.6Z M1.85 9.4 L5 15.4 L8.15 9.4Z" fill="#b0b0b0" stroke="#333" stroke-width=".5"/></svg>
<div class="" style="left:1911px;top:37px;width:9px;height:996px;background:#7b98c9;"></div>
<div class="" style="left:0px;top:1022px;width:1920px;height:11px;background:#7b98c9;"></div>
<div class="" style="left:1919px;top:0px;width:1px;height:1033px;background:#6583b5;"></div>
<div class="" style="left:0px;top:1031px;width:1920px;height:1px;background:#6280b2;"></div>
<div class="" style="left:0px;top:1032px;width:1920px;height:1px;background:#fdfdfd;"></div>
<svg style="left:1660px;top:1010px" width="12" height="12" viewBox="0 0 12 12"><path d="M0 0.6 L11.4 12 M0 4.2 L7.8 12 M0 7.8 L4.2 12" stroke="#2a2a2a" stroke-width="1.1"/><path d="M0 2.2 L9.8 12 M0 5.8 L6.2 12 M0 9.4 L2.6 12" stroke="#a8a8a8" stroke-width="1.1"/></svg>
</div>
</body></html>
